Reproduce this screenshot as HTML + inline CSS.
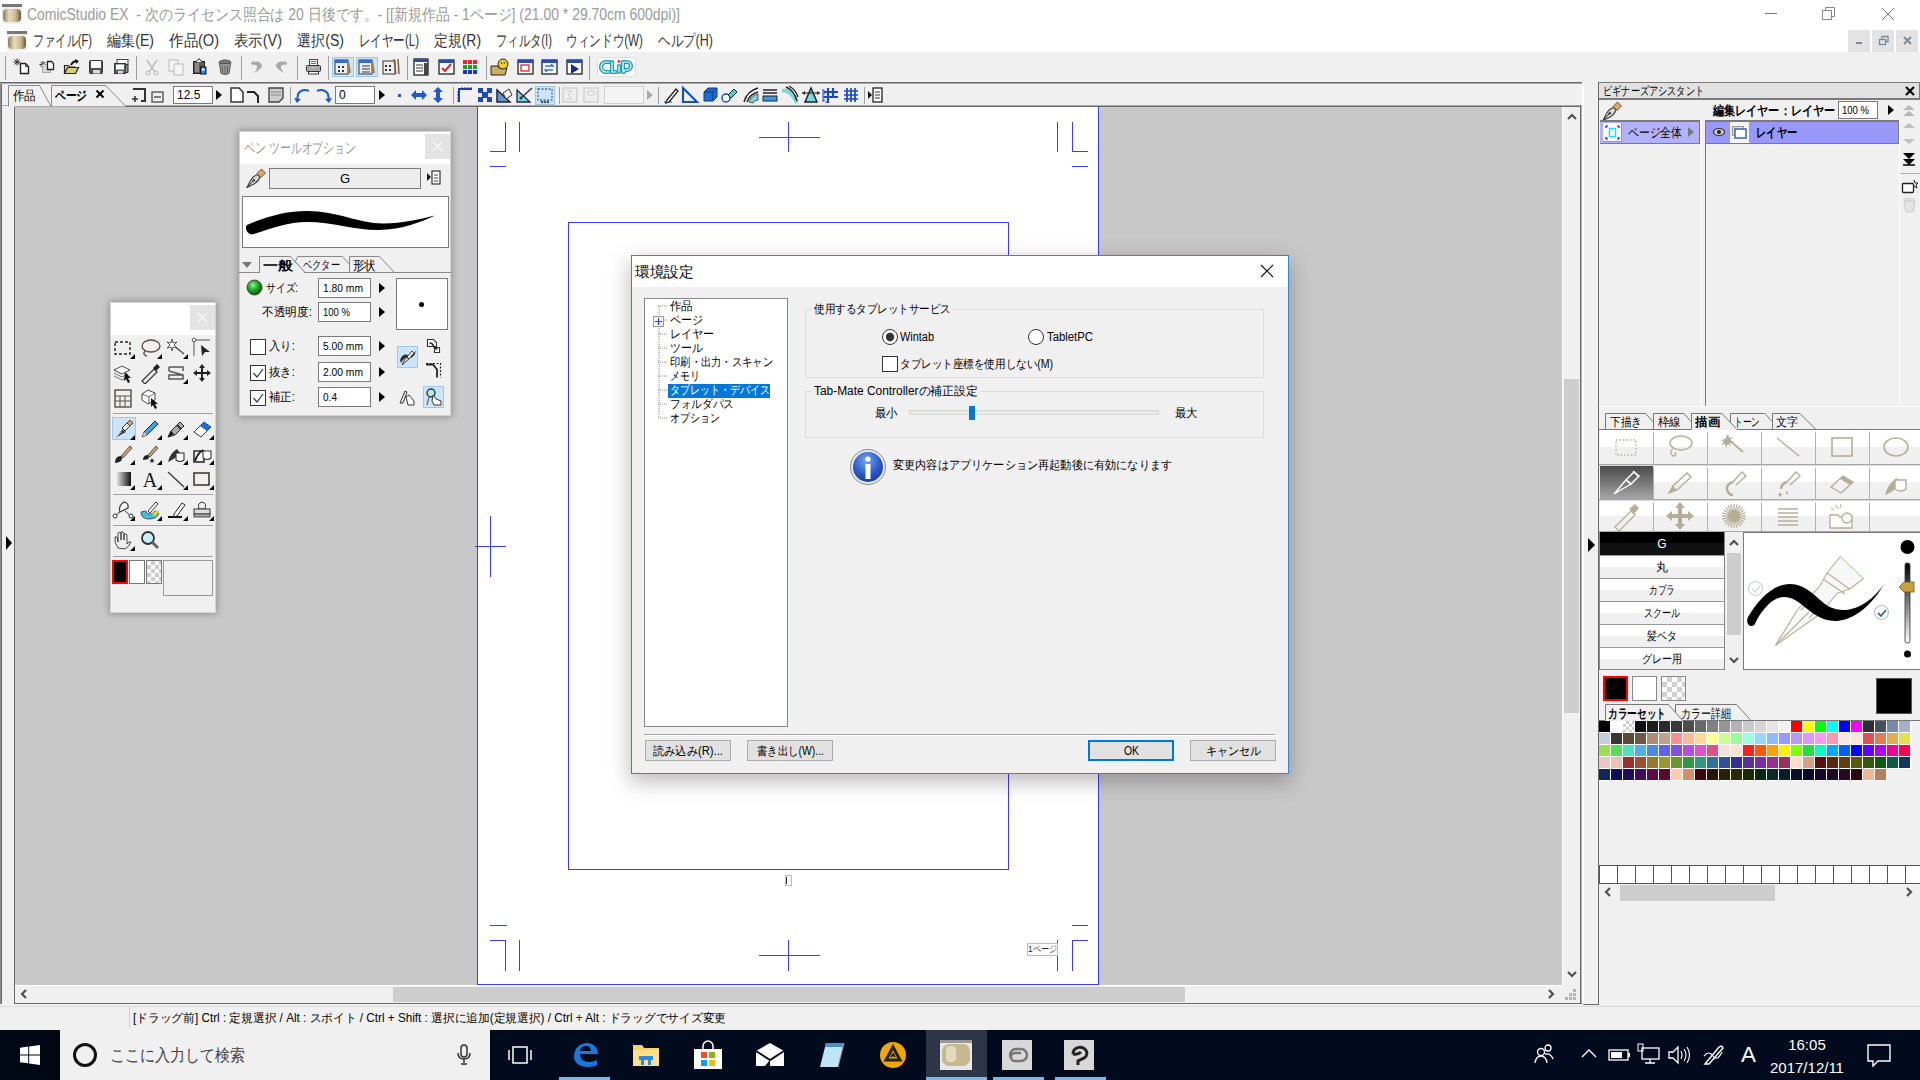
<!DOCTYPE html>
<html><head><meta charset="utf-8">
<style>
*{box-sizing:border-box;margin:0;padding:0}
html,body{width:1920px;height:1080px;overflow:hidden;background:#f0f0f0;font-family:"Liberation Sans",sans-serif;color:#000;position:relative}
.a{position:absolute}
.t{position:absolute;white-space:pre;line-height:1}
</style></head><body>
<div class="a" style="left:0px;top:0px;width:1920px;height:52px;background:#fff"></div>
<svg class="a" style="left:2px;top:4px;" width="20" height="20" viewBox="0 0 20 20"><defs><linearGradient id="csg2" x1="0" x2="1"><stop offset="0" stop-color="#8a7a5a"/><stop offset=".35" stop-color="#e8dcc0"/><stop offset=".7" stop-color="#c8b890"/><stop offset="1" stop-color="#6a5a40"/></linearGradient></defs><rect x="0" y="0" width="20" height="3" fill="#777"/><rect x="0" y="3" width="20" height="17" fill="#eee"/><rect x="1" y="5" width="18" height="13" rx="4" fill="url(#csg2)"/></svg>
<div class="t" style="left:27.0px;top:6.5px;width:751px;overflow-x:clip;overflow-y:visible;font-size:16px;color:#9a9a9a;font-weight:400;transform:scaleX(0.8722);transform-origin:0 0;">ComicStudio EX  - 次のライセンス照合は 20 日後です。- [[新規作品 - 1ページ] (21.00 * 29.70cm 600dpi)]</div>
<div class="a" style="left:1765px;top:13px;width:12px;height:1px;background:#777"></div>
<svg class="a" style="left:1822px;top:7px;" width="14" height="14" viewBox="0 0 14 14"><rect x="0.5" y="3.5" width="9" height="9" fill="none" stroke="#888"/><path d="M3.5 3.5V0.5H12.5V9.5H9.5" fill="none" stroke="#888"/></svg>
<svg class="a" style="left:1881px;top:7px;" width="14" height="14" viewBox="0 0 14 14"><path d="M1 1L13 13M13 1L1 13" stroke="#777" stroke-width="1"/></svg>
<svg class="a" style="left:7px;top:31px;" width="20" height="20" viewBox="0 0 20 20"><defs><linearGradient id="csg7" x1="0" x2="1"><stop offset="0" stop-color="#8a7a5a"/><stop offset=".35" stop-color="#e8dcc0"/><stop offset=".7" stop-color="#c8b890"/><stop offset="1" stop-color="#6a5a40"/></linearGradient></defs><rect x="0" y="0" width="20" height="3" fill="#777"/><rect x="0" y="3" width="20" height="17" fill="#eee"/><rect x="1" y="5" width="18" height="13" rx="4" fill="url(#csg7)"/></svg>
<div class="t" style="left:33.0px;top:33.0px;width:86px;overflow-x:clip;overflow-y:visible;font-size:16px;color:#333;font-weight:400;transform:scaleX(0.6987);transform-origin:0 0;">ファイル(F)</div>
<div class="t" style="left:107.0px;top:33.0px;width:55px;overflow-x:clip;overflow-y:visible;font-size:16px;color:#333;font-weight:400;transform:scaleX(0.8813);transform-origin:0 0;">編集(E)</div>
<div class="t" style="left:169.0px;top:33.0px;width:57px;overflow-x:clip;overflow-y:visible;font-size:16px;color:#333;font-weight:400;transform:scaleX(0.9073);transform-origin:0 0;">作品(O)</div>
<div class="t" style="left:234.0px;top:33.0px;width:55px;overflow-x:clip;overflow-y:visible;font-size:16px;color:#333;font-weight:400;transform:scaleX(0.9001);transform-origin:0 0;">表示(V)</div>
<div class="t" style="left:297.0px;top:33.0px;width:55px;overflow-x:clip;overflow-y:visible;font-size:16px;color:#333;font-weight:400;transform:scaleX(0.8813);transform-origin:0 0;">選択(S)</div>
<div class="t" style="left:359.0px;top:33.0px;width:86px;overflow-x:clip;overflow-y:visible;font-size:16px;color:#333;font-weight:400;transform:scaleX(0.7180);transform-origin:0 0;">レイヤー(L)</div>
<div class="t" style="left:434.0px;top:33.0px;width:56px;overflow-x:clip;overflow-y:visible;font-size:16px;color:#333;font-weight:400;transform:scaleX(0.8669);transform-origin:0 0;">定規(R)</div>
<div class="t" style="left:496.0px;top:33.0px;width:81px;overflow-x:clip;overflow-y:visible;font-size:16px;color:#333;font-weight:400;transform:scaleX(0.7079);transform-origin:0 0;">フィルタ(I)</div>
<div class="t" style="left:566.0px;top:33.0px;width:108px;overflow-x:clip;overflow-y:visible;font-size:16px;color:#333;font-weight:400;transform:scaleX(0.7280);transform-origin:0 0;">ウィンドウ(W)</div>
<div class="t" style="left:658.0px;top:33.0px;width:72px;overflow-x:clip;overflow-y:visible;font-size:16px;color:#333;font-weight:400;transform:scaleX(0.7833);transform-origin:0 0;">ヘルプ(H)</div>
<div class="a" style="left:1848px;top:30px;width:22px;height:23px;background:#e3e3e3"></div>
<div class="a" style="left:1872px;top:30px;width:22px;height:23px;background:#e3e3e3"></div>
<div class="a" style="left:1896px;top:30px;width:22px;height:23px;background:#e3e3e3"></div>
<svg class="a" style="left:1854px;top:33px;" width="12" height="14" viewBox="0 0 12 14"><rect x="2" y="9" width="6" height="2" fill="#7b8a99"/></svg>
<svg class="a" style="left:1878px;top:33px;" width="12" height="14" viewBox="0 0 12 14"><rect x="1.5" y="6.5" width="6" height="5" fill="none" stroke="#7b8a99" stroke-width="1.3"/><path d="M4 6V3.5H10V8.5H8" fill="none" stroke="#7b8a99" stroke-width="1.3"/></svg>
<svg class="a" style="left:1902px;top:33px;" width="12" height="14" viewBox="0 0 12 14"><path d="M2 4L9 11M9 4L2 11" stroke="#7b8a99" stroke-width="2"/></svg>
<div class="a" style="left:0px;top:52px;width:1920px;height:30px;background:#f0f0f0"></div>
<div class="a" style="left:0px;top:82px;width:1582px;height:1px;background:#6a6a6a"></div>
<div class="a" style="left:0px;top:83px;width:1582px;height:1px;background:#a8a8a8"></div>
<div class="a" style="left:0px;top:84px;width:1582px;height:22px;background:#f0f0f0"></div>
<div class="a" style="left:0px;top:105px;width:1582px;height:1px;background:#a8a8a8"></div>
<div class="a" style="left:14px;top:106px;width:1568px;height:1px;background:#6a6a6a"></div>
<div class="a" style="left:0px;top:84px;width:1px;height:920px;background:#8a8a8a"></div>
<div class="a" style="left:1px;top:84px;width:1px;height:920px;background:#6a6a6a"></div>
<div class="a" style="left:14px;top:107px;width:1px;height:897px;background:#6a6a6a"></div>
<div class="a" style="left:15px;top:107px;width:1547px;height:878px;background:#c8c8c8"></div>
<div class="a" style="left:5px;top:56px;width:1px;height:24px;background:#a0a0a0"></div>
<div class="a" style="left:136px;top:56px;width:1px;height:24px;background:#a0a0a0"></div>
<div class="a" style="left:241px;top:56px;width:1px;height:24px;background:#a0a0a0"></div>
<div class="a" style="left:297px;top:56px;width:1px;height:24px;background:#a0a0a0"></div>
<div class="a" style="left:328px;top:56px;width:1px;height:24px;background:#a0a0a0"></div>
<div class="a" style="left:407px;top:56px;width:1px;height:24px;background:#a0a0a0"></div>
<div class="a" style="left:486px;top:56px;width:1px;height:24px;background:#a0a0a0"></div>
<div class="a" style="left:589px;top:56px;width:1px;height:24px;background:#a0a0a0"></div>
<svg class="a" style="left:12px;top:57px;" width="20" height="20" viewBox="0 0 20 20"><path d="M5 1.5v7M1.5 5h7M2.5 2.5l5 5M7.5 2.5l-5 5" stroke="#3a2a2a" stroke-width="1"/><path d="M8.5 6.5h5l3 3v7h-8z" fill="#fff" stroke="#222" stroke-width="1.4"/><path d="M13.5 6.5v3h3" fill="none" stroke="#444"/></svg>
<svg class="a" style="left:36px;top:57px;" width="20" height="20" viewBox="0 0 20 20"><path d="M7 4v7M3.5 7.5h7M4.5 5l5 5M9.5 5l-5 5" stroke="#3a2a2a" stroke-width="1"/><rect x="6.5" y="7.5" width="8" height="8" fill="#d8d8d8" stroke="#aaa"/><path d="M11.5 4.5h4l2 2v6h-6z" fill="#fff" stroke="#222" stroke-width="1.3"/></svg>
<svg class="a" style="left:61px;top:57px;" width="20" height="20" viewBox="0 0 20 20"><path d="M3.5 8.5h4l1 1.5h5v6.5h-10z" fill="#e8e090" stroke="#222" stroke-width="1.2"/><path d="M3.5 16.5l3-6h11l-3 6z" fill="#d8d070" stroke="#222" stroke-width="1.2"/><path d="M10 8q2-4 6-4" fill="none" stroke="#111" stroke-width="1.8"/><path d="M14 2l4 2-3 3z" fill="#111"/></svg>
<svg class="a" style="left:86px;top:57px;" width="20" height="20" viewBox="0 0 20 20"><rect x="3.5" y="3.5" width="13" height="13" rx="1" fill="#4a4e58" stroke="#333"/><rect x="5" y="4" width="10" height="7" fill="#fff"/><rect x="7" y="13" width="7" height="3.5" fill="#d8ddd0"/></svg>
<svg class="a" style="left:111px;top:57px;" width="20" height="20" viewBox="0 0 20 20"><rect x="6" y="2.5" width="11" height="5" fill="#fff" stroke="#444"/><rect x="3.5" y="6.5" width="11" height="10" fill="#5a5e68" stroke="#333"/><rect x="5" y="7.5" width="8" height="5" fill="#fff"/><rect x="7" y="14" width="5" height="2.5" fill="#d8ddd0"/><path d="M15 7.5h2v8h-2.5" fill="#888" stroke="#333"/></svg>
<svg class="a" style="left:142px;top:57px;" width="20" height="20" viewBox="0 0 20 20"><path d="M5 3l8 12M15 3L7 15" stroke="#bbb" stroke-width="1.4"/><circle cx="6" cy="16" r="2" fill="none" stroke="#bbb"/><circle cx="14" cy="16" r="2" fill="none" stroke="#bbb"/></svg>
<svg class="a" style="left:166px;top:57px;" width="20" height="20" viewBox="0 0 20 20"><rect x="3" y="3" width="9" height="11" fill="#f4f4f4" stroke="#bbb"/><rect x="8" y="7" width="9" height="11" fill="#f4f4f4" stroke="#bbb"/></svg>
<svg class="a" style="left:190px;top:57px;" width="20" height="20" viewBox="0 0 20 20"><rect x="3.5" y="4.5" width="11" height="12" fill="#5a5a5a" stroke="#222"/><rect x="5" y="6" width="4" height="9" fill="#888"/><path d="M6 5l3-3.5 3 3.5" fill="#fff" stroke="#222"/><rect x="10.5" y="10" width="5.5" height="7" fill="#2a8ae8" stroke="#111"/><rect x="12" y="11.5" width="2.5" height="2" fill="#fff"/></svg>
<svg class="a" style="left:215px;top:57px;" width="20" height="20" viewBox="0 0 20 20"><ellipse cx="10" cy="5.5" rx="6" ry="2.5" fill="#777" stroke="#555"/><path d="M4.5 6.5h11l-1.5 10q-4 2-8 0z" fill="#999" stroke="#555"/><path d="M7.5 8.5v7M10 8.5v8M12.5 8.5v7" stroke="#666"/></svg>
<svg class="a" style="left:247px;top:57px;" width="20" height="20" viewBox="0 0 20 20"><path d="M4 6.5Q9 3 13 5.5Q17 8.5 13 12Q10 14.5 7 16Q10.5 12 10 9.5Q9.5 7.5 4 6.5z" fill="#a8a8a8"/><path d="M3.5 6.5l3-3v5z" fill="#a8a8a8"/></svg>
<svg class="a" style="left:271px;top:57px;" width="20" height="20" viewBox="0 0 20 20"><path d="M16 6.5Q11 3 7 5.5Q3 8.5 7 12Q10 14.5 13 16Q9.5 12 10 9.5Q10.5 7.5 16 6.5z" fill="#a8a8a8"/><path d="M16.5 6.5l-3-3v5z" fill="#a8a8a8"/></svg>
<svg class="a" style="left:303px;top:57px;" width="20" height="20" viewBox="0 0 20 20"><rect x="6.5" y="2.5" width="8" height="6" fill="#fff" stroke="#444"/><path d="M8 4.5h5M8 6.5h5" stroke="#2a7ad0" stroke-width="1.2"/><rect x="3.5" y="8.5" width="14" height="6" rx="1" fill="#aaa" stroke="#333"/><rect x="9" y="10" width="3" height="1" fill="#e0d040"/><rect x="5.5" y="14.5" width="10" height="2.5" fill="#fff" stroke="#333"/></svg>
<div class="a" style="left:332px;top:57px;width:22px;height:20px;background:#cce4f7;border:1px solid #99c9ef"></div>
<div class="a" style="left:356px;top:57px;width:22px;height:20px;background:#cce4f7;border:1px solid #99c9ef"></div>
<svg class="a" style="left:333px;top:57px;" width="20" height="20" viewBox="0 0 20 20"><rect x="2" y="3" width="13" height="14" fill="#eee" stroke="#333"/><rect x="2" y="3" width="13" height="3" fill="#3a6ad0"/><path d="M5 9h2v2H5zM9 9h2v2H9zM5 13h2v2H5zM9 13h2v2H9z" fill="#333"/><path d="M15 4l2 12" stroke="#a08040" stroke-width="2"/></svg>
<svg class="a" style="left:357px;top:57px;" width="20" height="20" viewBox="0 0 20 20"><rect x="2" y="3" width="13" height="14" fill="#eee" stroke="#333"/><rect x="2" y="3" width="13" height="3" fill="#3a6ad0"/><path d="M5 9h8M5 12h8M5 15h8" stroke="#333"/><path d="M15 4l2 12" stroke="#a08040" stroke-width="2"/></svg>
<svg class="a" style="left:381px;top:57px;" width="20" height="20" viewBox="0 0 20 20"><rect x="2" y="4" width="12" height="13" fill="#eee" stroke="#333"/><path d="M4 8h2v2H4zM8 8h2v2H8zM4 12h2v2H4zM8 12h2v2H8z" fill="#333"/><path d="M13 2l2 15M17 2l1 15" stroke="#806040" stroke-width="1.5"/></svg>
<svg class="a" style="left:411px;top:57px;" width="20" height="20" viewBox="0 0 20 20"><rect x="3" y="2" width="14" height="16" fill="#fff" stroke="#222" stroke-width="1.3"/><rect x="3" y="2" width="14" height="3" fill="#2a4ab0"/><path d="M5 8h7M5 11h7M5 14h7" stroke="#333"/><rect x="13" y="6" width="4" height="12" fill="#444"/></svg>
<svg class="a" style="left:436px;top:57px;" width="20" height="20" viewBox="0 0 20 20"><rect x="3" y="3" width="15" height="14" fill="#fff" stroke="#222" stroke-width="1.3"/><rect x="3" y="3" width="15" height="3" fill="#2a4ab0"/><path d="M6 11l3 3 6-7" stroke="#e02020" stroke-width="2" fill="none"/></svg>
<svg class="a" style="left:460px;top:57px;" width="20" height="20" viewBox="0 0 20 20"><g><rect x="3" y="3" width="4" height="4" fill="#e02828"/><rect x="8" y="3" width="4" height="4" fill="#e02828"/><rect x="13" y="3" width="4" height="4" fill="#e02828"/><rect x="3" y="8" width="4" height="4" fill="#20a020"/><rect x="8" y="8" width="4" height="4" fill="#20a020"/><rect x="13" y="8" width="4" height="4" fill="#20a020"/><rect x="3" y="13" width="4" height="4" fill="#2828d8"/><rect x="8" y="13" width="4" height="4" fill="#2828d8"/><rect x="13" y="13" width="4" height="4" fill="#2828d8"/></g></svg>
<svg class="a" style="left:490px;top:57px;" width="20" height="20" viewBox="0 0 20 20"><path d="M1 9h7l1 2h8l-2 7H1z" fill="#c8b058" stroke="#222"/><circle cx="13" cy="7" r="5" fill="#f0d020" stroke="#222"/><circle cx="11.5" cy="6" r=".8" fill="#222"/><circle cx="14.5" cy="6" r=".8" fill="#222"/></svg>
<svg class="a" style="left:515px;top:57px;" width="20" height="20" viewBox="0 0 20 20"><rect x="3" y="3" width="15" height="14" fill="#fff" stroke="#222" stroke-width="1.3"/><rect x="3" y="3" width="15" height="3" fill="#2a4ab0"/><rect x="6" y="8" width="8" height="6" fill="none" stroke="#e02020" stroke-width="1.3"/></svg>
<svg class="a" style="left:539px;top:57px;" width="20" height="20" viewBox="0 0 20 20"><rect x="3" y="3" width="15" height="14" fill="#fff" stroke="#222" stroke-width="1.3"/><rect x="3" y="3" width="15" height="3" fill="#2a4ab0"/><path d="M6 9h8l-2-2M14 13H6l2 2" stroke="#2a7ad0" stroke-width="1.5" fill="none"/></svg>
<svg class="a" style="left:564px;top:57px;" width="20" height="20" viewBox="0 0 20 20"><rect x="3" y="3" width="15" height="14" fill="#fff" stroke="#222" stroke-width="1.3"/><rect x="3" y="3" width="15" height="3" fill="#2a4ab0"/><path d="M7 7l8 5-8 5z" fill="#1a2a90"/></svg>
<div class="a" style="left:597px;top:57px;width:39px;height:20px;background:#fff;border:1px solid #ddd;border-radius:3px"></div>
<svg class="a" style="left:599px;top:58px;" width="35" height="18" viewBox="0 0 35 18"><g fill="none" stroke-linecap="round" stroke-linejoin="round"><g stroke="#1aa0b4" stroke-width="4.2"><path d="M10 4H7a5 5 0 0 0 0 10h3"/><path d="M13 4v10h4"/><path d="M20 8v6"/><path d="M24 14V4h4a4 4 0 0 1 0 8h-2q-1 0-1 2"/></g><g stroke="#fff" stroke-width="1.2"><path d="M10 4H7a5 5 0 0 0 0 10h3"/><path d="M13 4v10h4"/><path d="M20 8v6"/><path d="M24 14V4h4a4 4 0 0 1 0 8h-2q-1 0-1 2"/></g></g><circle cx="20" cy="3.5" r="1.4" fill="#e03030"/></svg>
<svg class="a" style="left:6px;top:84px;" width="125" height="23" viewBox="0 0 125 23"><path d="M2.5 22.5V1.5H33.5L45 22.5" fill="#f0f0f0" stroke="#888"/><path d="M45.5 22.5V1.5H99.5L120 22.5" fill="#f0f0f0" stroke="#888"/></svg>
<div class="t" style="left:13.0px;top:88.5px;width:28px;overflow-x:clip;overflow-y:visible;font-size:13px;color:#000;font-weight:400;transform:scaleX(0.8846);transform-origin:0 0;">作品</div>
<div class="t" style="left:55.0px;top:88.5px;width:41px;overflow-x:clip;overflow-y:visible;font-size:13px;color:#000;font-weight:700;transform:scaleX(0.8205);transform-origin:0 0;">ページ</div>
<svg class="a" style="left:95px;top:89px;" width="10" height="10" viewBox="0 0 10 10"><path d="M1.5 1.5L8.5 8.5M8.5 1.5L1.5 8.5" stroke="#000" stroke-width="2"/></svg>
<svg class="a" style="left:130px;top:85px;" width="20" height="20" viewBox="0 0 20 20"><path d="M3 4h12v12h-4" fill="none" stroke="#333" stroke-width="2"/><path d="M5 11v6M2 14h6" stroke="#333" stroke-width="1.5"/></svg>
<svg class="a" style="left:148px;top:85px;" width="20" height="20" viewBox="0 0 20 20"><rect x="4" y="7" width="11" height="10" fill="#eee" stroke="#555" stroke-width="1.4"/><path d="M6 12h7" stroke="#555" stroke-width="1.5"/></svg>
<div class="a" style="left:173px;top:86px;width:40px;height:18px;background:#fff;border:1px solid #7a7a7a"></div>
<div class="t" style="left:177.0px;top:89.0px;width:25px;overflow-x:clip;overflow-y:visible;font-size:12px;color:#000;font-weight:400;">12.5</div>
<svg class="a" style="left:216px;top:90px;" width="6" height="10" viewBox="0 0 6 10"><path d="M0 0L6 5L0 10z" fill="#000"/></svg>
<svg class="a" style="left:227px;top:85px;" width="20" height="20" viewBox="0 0 20 20"><path d="M4 3h8l4 4v10H4z" fill="#fff" stroke="#333" stroke-width="1.5"/></svg>
<svg class="a" style="left:244px;top:85px;" width="20" height="20" viewBox="0 0 20 20"><path d="M3 7h7l4 4v7" fill="none" stroke="#222" stroke-width="2"/></svg>
<svg class="a" style="left:266px;top:85px;" width="20" height="20" viewBox="0 0 20 20"><path d="M3 3h14v10l-4 4H3z" fill="#ccc" stroke="#444" stroke-width="1.4"/><path d="M5 7h10M5 10h10" stroke="#888"/></svg>
<div class="a" style="left:290px;top:87px;width:1px;height:17px;background:#a0a0a0"></div>
<svg class="a" style="left:293px;top:85px;" width="20" height="20" viewBox="0 0 20 20"><path d="M16 6a8 8 0 0 0-11 3l-1 7" fill="none" stroke="#1a5ad0" stroke-width="2"/><path d="M1 13l3 5 4-4z" fill="#1a5ad0"/></svg>
<svg class="a" style="left:314px;top:85px;" width="20" height="20" viewBox="0 0 20 20"><path d="M3 6a8 8 0 0 1 11 3l1 7" fill="none" stroke="#1a5ad0" stroke-width="2"/><path d="M18 13l-3 5-4-4z" fill="#1a5ad0"/></svg>
<div class="a" style="left:335px;top:86px;width:40px;height:18px;background:#fff;border:1px solid #7a7a7a"></div>
<div class="t" style="left:339.0px;top:89.0px;width:9px;overflow-x:clip;overflow-y:visible;font-size:12px;color:#000;font-weight:400;">0</div>
<svg class="a" style="left:379px;top:90px;" width="6" height="10" viewBox="0 0 6 10"><path d="M0 0L6 5L0 10z" fill="#000"/></svg>
<div class="a" style="left:398px;top:94px;width:3px;height:3px;background:#1a5ad0"></div>
<svg class="a" style="left:409px;top:85px;" width="20" height="20" viewBox="0 0 20 20"><path d="M2 10l5-5v3h6V5l5 5-5 5v-3H7v3z" fill="#1a5ad0"/></svg>
<svg class="a" style="left:428px;top:85px;" width="20" height="20" viewBox="0 0 20 20"><path d="M10 2l5 5h-3v6h3l-5 5-5-5h3V7H5z" fill="#1a5ad0"/></svg>
<div class="a" style="left:453px;top:87px;width:1px;height:17px;background:#a0a0a0"></div>
<svg class="a" style="left:455px;top:85px;" width="20" height="20" viewBox="0 0 20 20"><path d="M4 17V4h13" fill="none" stroke="#1a3ab0" stroke-width="2"/><path d="M7 4V2M10 4V2M13 4V2M16 4V2M4 7H2M4 10H2M4 13H2M4 16H2" stroke="#1a3ab0"/></svg>
<svg class="a" style="left:475px;top:85px;" width="20" height="20" viewBox="0 0 20 20"><path d="M3 3h5v5H3zM12 3h5v5h-5zM3 12h5v5H3zM12 12h5v5h-5zM7 7h6v6H7z" fill="#1a4ab8"/></svg>
<svg class="a" style="left:495px;top:85px;" width="20" height="20" viewBox="0 0 20 20"><path d="M2 17V5l13 12z" fill="#5a9ad8" stroke="#223" stroke-width="1.5"/><path d="M8 8l6-4 3 6-6 4z" fill="#eee" stroke="#333"/></svg>
<svg class="a" style="left:515px;top:85px;" width="20" height="20" viewBox="0 0 20 20"><path d="M2 17V5l13 12z" fill="#7ad8e8" stroke="#225" stroke-width="1.3"/><path d="M6 13l11-10" stroke="#333" stroke-width="1.4"/><circle cx="6" cy="13" r="1.5" fill="#333"/></svg>
<div class="a" style="left:535px;top:86px;width:20px;height:19px;background:#cce4f7;border:1px solid #99c9ef"></div>
<svg class="a" style="left:535px;top:85px;" width="20" height="20" viewBox="0 0 20 20"><rect x="3" y="4" width="14" height="11" fill="none" stroke="#4a6a9a" stroke-dasharray="2 1.5" stroke-width="1.3"/><circle cx="7" cy="17" r="1.3" fill="#555"/><circle cx="10" cy="17" r="1.3" fill="#555"/><circle cx="13" cy="17" r="1.3" fill="#555"/></svg>
<div class="a" style="left:559px;top:87px;width:1px;height:17px;background:#a0a0a0"></div>
<svg class="a" style="left:560px;top:85px;" width="20" height="20" viewBox="0 0 20 20"><rect x="3" y="3" width="14" height="14" fill="#eee" stroke="#ccc" stroke-width="1.3"/><path d="M7 6h5l-4 4 4 4H7" fill="none" stroke="#ccc"/></svg>
<svg class="a" style="left:581px;top:85px;" width="20" height="20" viewBox="0 0 20 20"><rect x="3" y="3" width="14" height="14" fill="#eee" stroke="#ccc" stroke-width="1.3"/><ellipse cx="10" cy="8" rx="4" ry="2.5" fill="none" stroke="#ccc"/></svg>
<div class="a" style="left:604px;top:86px;width:40px;height:18px;background:#f4f4f4;border:1px solid #d0d0d0"></div>
<svg class="a" style="left:647px;top:90px;" width="6" height="10" viewBox="0 0 6 10"><path d="M0 0L6 5L0 10z" fill="#aaa"/></svg>
<div class="a" style="left:658px;top:87px;width:1px;height:17px;background:#a0a0a0"></div>
<svg class="a" style="left:660px;top:85px;" width="20" height="20" viewBox="0 0 20 20"><path d="M4 17h8" stroke="#2a8ae0" stroke-width="1.5"/><path d="M7 15l9-11 2 2-9 11-3 1z" fill="#fff" stroke="#222" stroke-width="1.3"/></svg>
<svg class="a" style="left:680px;top:85px;" width="20" height="20" viewBox="0 0 20 20"><path d="M3 17V3l14 14z" fill="none" stroke="#1a6ad0" stroke-width="2.2"/><path d="M3 17V3l14 14z" fill="none" stroke="#222" stroke-width=".6"/></svg>
<svg class="a" style="left:700px;top:85px;" width="20" height="20" viewBox="0 0 20 20"><path d="M4 7l4-4h9v9l-4 4H4z" fill="#1a6ad0" stroke="#0a3a80"/><path d="M4 7h9v9M13 7l4-4" stroke="#0a3a80" fill="none"/></svg>
<svg class="a" style="left:719px;top:85px;" width="20" height="20" viewBox="0 0 20 20"><circle cx="7" cy="13" r="4" fill="#fff" stroke="#1a4ab8" stroke-width="1.5"/><path d="M9 10l6-6 3 3-6 6z" fill="#40d0d8" stroke="#222"/></svg>
<svg class="a" style="left:741px;top:85px;" width="20" height="20" viewBox="0 0 20 20"><path d="M3 17Q6 6 17 3M6 17Q9 9 17 7" fill="none" stroke="#222" stroke-width="1.4"/><path d="M8 17q3-7 9-8v6q-4 0-5 3z" fill="#7ad8e0" stroke="#333" stroke-width=".8"/></svg>
<svg class="a" style="left:760px;top:85px;" width="20" height="20" viewBox="0 0 20 20"><path d="M3 5h14M3 8h14" stroke="#222" stroke-width="1.6"/><rect x="3" y="11" width="14" height="5" fill="#3a9ae0" stroke="#222"/></svg>
<svg class="a" style="left:780px;top:85px;" width="20" height="20" viewBox="0 0 20 20"><path d="M2 6q8-3 15 12" fill="none" stroke="#7ad8e0" stroke-width="4"/><path d="M6 2q8 3 11 14M9 1q7 4 9 11" fill="none" stroke="#222" stroke-width="1.4"/></svg>
<svg class="a" style="left:801px;top:85px;" width="20" height="20" viewBox="0 0 20 20"><path d="M10 3L4 17h12z" fill="#7ad8e0" stroke="#222" stroke-width="1.5"/><path d="M1 8h18" stroke="#333" stroke-width="1.2"/><path d="M1 8l3-2v4zM19 8l-3-2v4z" fill="#333"/></svg>
<svg class="a" style="left:820px;top:85px;" width="20" height="20" viewBox="0 0 20 20"><path d="M8 3v15M13 3v9M4 7h14M4 12h14" stroke="#1a4ab8" stroke-width="2.2"/><path d="M3 4v13M3 6h2M3 9h2M3 12h2M3 15h2M5 17h2" stroke="#1a4ab8" stroke-width="1"/></svg>
<svg class="a" style="left:841px;top:85px;" width="20" height="20" viewBox="0 0 20 20"><path d="M6 3v14M10 3v14M14 3v14M3 6h14M3 10h14M3 14h14" stroke="#1a4ab8" stroke-width="1.7"/></svg>
<div class="a" style="left:864px;top:87px;width:1px;height:17px;background:#a0a0a0"></div>
<svg class="a" style="left:866px;top:85px;" width="20" height="20" viewBox="0 0 20 20"><path d="M2 6l4 4-4 4z" fill="#111"/><rect x="7" y="3" width="9" height="14" fill="#fff" stroke="#222" stroke-width="1.3"/><path d="M9 7h5M9 10h5M9 13h5" stroke="#333"/></svg>
<div class="a" style="left:477px;top:107px;width:622px;height:878px;background:#fff"></div>
<div class="a" style="left:477px;top:107px;width:1px;height:878px;background:#3c3cff"></div>
<div class="a" style="left:1098px;top:107px;width:1px;height:878px;background:#3c3cff"></div>
<div class="a" style="left:477px;top:984px;width:622px;height:1px;background:#3c3cff"></div>
<div class="a" style="left:568px;top:222px;width:441px;height:1px;background:#3c3cff"></div>
<div class="a" style="left:568px;top:869px;width:441px;height:1px;background:#3c3cff"></div>
<div class="a" style="left:568px;top:222px;width:1px;height:648px;background:#3c3cff"></div>
<div class="a" style="left:1008px;top:222px;width:1px;height:648px;background:#3c3cff"></div>
<div class="a" style="left:505px;top:122px;width:1px;height:30px;background:#3c3cff"></div>
<div class="a" style="left:490px;top:151px;width:16px;height:1px;background:#3c3cff"></div>
<div class="a" style="left:519px;top:122px;width:1px;height:30px;background:#3c3cff"></div>
<div class="a" style="left:490px;top:166px;width:16px;height:1px;background:#3c3cff"></div>
<div class="a" style="left:788px;top:122px;width:1px;height:30px;background:#3c3cff"></div>
<div class="a" style="left:759px;top:137px;width:61px;height:1px;background:#3c3cff"></div>
<div class="a" style="left:1057px;top:122px;width:1px;height:30px;background:#3c3cff"></div>
<div class="a" style="left:1072px;top:122px;width:1px;height:30px;background:#3c3cff"></div>
<div class="a" style="left:1072px;top:151px;width:16px;height:1px;background:#3c3cff"></div>
<div class="a" style="left:1072px;top:166px;width:16px;height:1px;background:#3c3cff"></div>
<div class="a" style="left:490px;top:925px;width:17px;height:1px;background:#3c3cff"></div>
<div class="a" style="left:490px;top:940px;width:16px;height:1px;background:#3c3cff"></div>
<div class="a" style="left:505px;top:940px;width:1px;height:31px;background:#3c3cff"></div>
<div class="a" style="left:519px;top:940px;width:1px;height:31px;background:#3c3cff"></div>
<div class="a" style="left:788px;top:940px;width:1px;height:31px;background:#3c3cff"></div>
<div class="a" style="left:759px;top:955px;width:61px;height:1px;background:#3c3cff"></div>
<div class="a" style="left:1057px;top:940px;width:1px;height:31px;background:#3c3cff"></div>
<div class="a" style="left:1072px;top:940px;width:1px;height:31px;background:#3c3cff"></div>
<div class="a" style="left:1072px;top:940px;width:16px;height:1px;background:#3c3cff"></div>
<div class="a" style="left:1072px;top:925px;width:16px;height:1px;background:#3c3cff"></div>
<div class="a" style="left:490px;top:516px;width:1px;height:61px;background:#3c3cff"></div>
<div class="a" style="left:475px;top:546px;width:31px;height:1px;background:#3c3cff"></div>
<div class="a" style="left:785px;top:875px;width:7px;height:11px;border:1px solid #60e0f0"></div>
<div class="a" style="left:786px;top:877px;width:1px;height:7px;background:#333"></div>
<div class="a" style="left:1027px;top:943px;width:31px;height:13px;border:1px solid #60e0f0"></div>
<div class="t" style="left:1028.0px;top:944.5px;width:34px;overflow-x:clip;overflow-y:visible;font-size:9px;color:#222;font-weight:400;transform:scaleX(0.9058);transform-origin:0 0;">1ページ</div>
<div class="a" style="left:1562px;top:107px;width:1px;height:878px;background:#fff"></div>
<div class="a" style="left:1563px;top:107px;width:17px;height:878px;background:#f0f0f0"></div>
<svg class="a" style="left:1566px;top:112px;" width="12" height="10" viewBox="0 0 12 10"><path d="M2 7l4-4 4 4" fill="none" stroke="#505050" stroke-width="2.2"/></svg>
<svg class="a" style="left:1566px;top:969px;" width="12" height="10" viewBox="0 0 12 10"><path d="M2 3l4 4 4-4" fill="none" stroke="#505050" stroke-width="2.2"/></svg>
<div class="a" style="left:1564px;top:379px;width:15px;height:334px;background:#cdcdcd"></div>
<div class="a" style="left:1580px;top:105px;width:1px;height:899px;background:#6a6a6a"></div>
<div class="a" style="left:1581px;top:105px;width:1px;height:899px;background:#b0b0b0"></div>
<div class="a" style="left:1580px;top:84px;width:2px;height:21px;background:#f0f0f0"></div>
<div class="a" style="left:15px;top:985px;width:1565px;height:18px;background:#f0f0f0"></div>
<div class="a" style="left:15px;top:985px;width:1547px;height:1px;background:#fff"></div>
<svg class="a" style="left:19px;top:988px;" width="12" height="12" viewBox="0 0 12 12"><path d="M7 2L3 6l4 4" fill="none" stroke="#505050" stroke-width="2.2"/></svg>
<svg class="a" style="left:1545px;top:988px;" width="12" height="12" viewBox="0 0 12 12"><path d="M4 2l4 4-4 4" fill="none" stroke="#505050" stroke-width="2.2"/></svg>
<div class="a" style="left:393px;top:987px;width:792px;height:15px;background:#cdcdcd"></div>
<svg class="a" style="left:1565px;top:989px;" width="14" height="14" viewBox="0 0 14 14"><g fill="#b4b4b4"><rect x="8" y="0" width="3" height="3"/><rect x="8" y="4" width="3" height="3"/><rect x="8" y="8" width="3" height="3"/><rect x="4" y="4" width="3" height="3"/><rect x="4" y="8" width="3" height="3"/><rect x="0" y="8" width="3" height="3"/></g></svg>
<div class="a" style="left:14px;top:1003px;width:1568px;height:1px;background:#6a6a6a"></div>
<div class="a" style="left:0px;top:1005px;width:1920px;height:25px;background:#f0f0f0"></div>
<div class="a" style="left:0px;top:1006px;width:1920px;height:1px;background:#dadada"></div>
<div class="a" style="left:129px;top:1007px;width:1px;height:21px;background:#d0d0d0"></div>
<div class="t" style="left:133.0px;top:1012.0px;width:609px;overflow-x:clip;overflow-y:visible;font-size:12px;color:#000;font-weight:400;transform:scaleX(0.9774);transform-origin:0 0;">[ドラッグ前] Ctrl : 定規選択 / Alt : スポイト / Ctrl + Shift : 選択に追加(定規選択) / Ctrl + Alt : ドラッグでサイズ変更</div>
<svg class="a" style="left:5px;top:535px;" width="8" height="16" viewBox="0 0 8 16"><path d="M1 1L7 8L1 15z" fill="#000"/></svg>
<div class="a" style="left:0px;top:1030px;width:1920px;height:50px;background:#020b1e"></div>
<div class="a" style="left:0px;top:1030px;width:60px;height:50px;background:#000814"></div>
<svg class="a" style="left:20px;top:1045px;" width="20" height="20" viewBox="0 0 20 20"><path d="M0 2.8L8.2 1.6V9.4H0zM9.2 1.5L20 0V9.4H9.2zM0 10.4H8.2V18.3L0 17.2zM9.2 10.4H20V20L9.2 18.5z" fill="#fff"/></svg>
<div class="a" style="left:60px;top:1030px;width:430px;height:50px;background:#f0f0f0"></div>
<svg class="a" style="left:72px;top:1042px;" width="26" height="26" viewBox="0 0 26 26"><circle cx="13" cy="13" r="10.5" fill="none" stroke="#111" stroke-width="3"/></svg>
<div class="t" style="left:110.0px;top:1046.5px;width:155px;overflow-x:clip;overflow-y:visible;font-size:17px;color:#444;font-weight:400;transform:scaleX(0.8824);transform-origin:0 0;">ここに入力して検索</div>
<svg class="a" style="left:456px;top:1044px;" width="16" height="22" viewBox="0 0 16 22"><rect x="5" y="1" width="6" height="12" rx="3" fill="none" stroke="#333" stroke-width="1.5"/><path d="M2 9q0 6 6 6t6-6M8 15v4M5 20h6" fill="none" stroke="#333" stroke-width="1.5"/></svg>
<svg class="a" style="left:507px;top:1045px;" width="26" height="20" viewBox="0 0 26 20"><rect x="6" y="2" width="14" height="16" fill="none" stroke="#fff" stroke-width="1.5"/><path d="M2 5v10M24 5v10" stroke="#fff" stroke-width="1.5"/></svg>
<svg class="a" style="left:570px;top:1040px;" width="30" height="30" viewBox="0 0 30 30"><path d="M4 17C4 8 10 3 17 3c7 0 11 5 11 11H10c0 5 4 8 9 8 3 0 6-1 8-2v5c-2 1-5 2-9 2C10 27 4 23 4 17z" fill="#1a78dc"/><path d="M10 11h11c0-3-2-5-5-5s-6 2-6 5z" fill="#020b1e"/></svg>
<div class="a" style="left:559px;top:1077px;width:51px;height:3px;background:#76b9ed"></div>
<svg class="a" style="left:632px;top:1041px;" width="28" height="26" viewBox="0 0 28 26"><path d="M1 4h9l2 3h15v18H1z" fill="#f8d070"/><path d="M1 9h26v16H1z" fill="#fce08a"/><rect x="7" y="15" width="14" height="4" fill="#2a8ae0"/><rect x="9" y="19" width="3" height="5" fill="#2a8ae0"/><rect x="16" y="19" width="3" height="5" fill="#2a8ae0"/></svg>
<svg class="a" style="left:693px;top:1040px;" width="30" height="30" viewBox="0 0 30 30"><path d="M10 9V6a5 5 0 0 1 10 0v3" fill="none" stroke="#fff" stroke-width="1.5"/><rect x="1" y="9" width="28" height="20" fill="#fff"/><rect x="8" y="12" width="6" height="6" fill="#f25022"/><rect x="16" y="12" width="6" height="6" fill="#7fba00"/><rect x="8" y="20" width="6" height="6" fill="#00a4ef"/><rect x="16" y="20" width="6" height="6" fill="#ffb900"/></svg>
<svg class="a" style="left:755px;top:1041px;" width="30" height="28" viewBox="0 0 30 28"><path d="M1 10L15 2l14 8v15H1z" fill="#fff"/><path d="M1 10l14 9 14-9" fill="none" stroke="#020b1e" stroke-width="2"/><path d="M15 19l-5 6h5z" fill="#020b1e"/></svg>
<svg class="a" style="left:818px;top:1041px;" width="28" height="28" viewBox="0 0 28 28"><path d="M8 2h18l-6 24H2z" fill="#bfe4f4"/><path d="M8 2h18l-1 4H7z" fill="#4a90c0"/><path d="M20 26l6-24" stroke="#999"/></svg>
<svg class="a" style="left:878px;top:1040px;" width="30" height="30" viewBox="0 0 30 30"><circle cx="15" cy="15" r="13" fill="#f0a800"/><path d="M15 7l-7 13h14z" fill="none" stroke="#222" stroke-width="3"/><path d="M13 17l2-3 2 3" fill="none" stroke="#222" stroke-width="2"/></svg>
<div class="a" style="left:926px;top:1030px;width:61px;height:50px;background:#2c3648"></div>
<div class="a" style="left:926px;top:1077px;width:61px;height:3px;background:#76b9ed"></div>
<svg class="a" style="left:940px;top:1040px;" width="32" height="30" viewBox="0 0 32 30"><rect x="0" y="0" width="32" height="30" fill="#e8e8e8"/><rect x="2" y="4" width="28" height="22" rx="7" fill="#c8b890"/><rect x="6" y="6" width="10" height="16" rx="4" fill="#f0e8d0" opacity=".7"/><rect x="0" y="0" width="32" height="3" fill="#999"/></svg>
<svg class="a" style="left:1002px;top:1040px;" width="30" height="30" viewBox="0 0 30 30"><rect width="30" height="30" fill="#d8d8d8"/><path d="M9 18a6 6 0 0 1 6-9h4a6 6 0 0 1 0 12h-6a4 4 0 0 1 0-8h6" fill="none" stroke="#777" stroke-width="2.5"/></svg>
<div class="a" style="left:993px;top:1077px;width:51px;height:3px;background:#76b9ed"></div>
<svg class="a" style="left:1064px;top:1040px;" width="30" height="30" viewBox="0 0 30 30"><rect width="30" height="30" fill="#d8d8d8"/><path d="M9 14a7 6 0 1 1 9 5l-4 2v4M9 14q5 1 8-2" fill="none" stroke="#222" stroke-width="3"/></svg>
<div class="a" style="left:1055px;top:1077px;width:51px;height:3px;background:#76b9ed"></div>
<svg class="a" style="left:1533px;top:1043px;" width="22" height="22" viewBox="0 0 22 22"><circle cx="8" cy="9" r="3.5" fill="none" stroke="#fff" stroke-width="1.3"/><path d="M2 20q1-7 6-7t6 7" fill="none" stroke="#fff" stroke-width="1.3"/><circle cx="15" cy="5" r="3" fill="none" stroke="#fff" stroke-width="1.3"/><path d="M12 11q6-1 8 5" fill="none" stroke="#fff" stroke-width="1.3"/></svg>
<svg class="a" style="left:1580px;top:1047px;" width="18" height="12" viewBox="0 0 18 12"><path d="M2 10l7-7 7 7" fill="none" stroke="#fff" stroke-width="1.4"/></svg>
<svg class="a" style="left:1608px;top:1048px;" width="24" height="14" viewBox="0 0 24 14"><rect x="1" y="2" width="19" height="10" fill="none" stroke="#fff" stroke-width="1.3"/><rect x="3" y="4" width="11" height="6" fill="#fff"/><rect x="20" y="5" width="2" height="4" fill="#fff"/></svg>
<svg class="a" style="left:1637px;top:1043px;" width="26" height="22" viewBox="0 0 26 22"><rect x="1" y="1" width="5" height="7" fill="none" stroke="#fff"/><rect x="5" y="5" width="17" height="11" fill="none" stroke="#fff" stroke-width="1.3"/><path d="M13 16v4M8 20h10" stroke="#fff" stroke-width="1.3"/></svg>
<svg class="a" style="left:1667px;top:1044px;" width="26" height="22" viewBox="0 0 26 22"><path d="M2 8h4l5-5v16l-5-5H2z" fill="none" stroke="#fff" stroke-width="1.3"/><path d="M14 7q2 4 0 8M17 5q4 6 0 12M20 3q5 8 0 16" fill="none" stroke="#fff" stroke-width="1.1"/></svg>
<svg class="a" style="left:1701px;top:1042px;" width="26" height="26" viewBox="0 0 26 26"><path d="M4 22L18 5q3-2 4 1L8 22z" fill="none" stroke="#fff" stroke-width="1.4"/><path d="M3 14q5-6 9 0t9-4" fill="none" stroke="#fff" stroke-width="1.2"/></svg>
<div class="t" style="left:1740.5px;top:1044.0px;width:17px;overflow-x:clip;overflow-y:visible;font-size:22px;color:#fff;font-weight:400;transform:scaleX(1.0213);transform-origin:0 0;">A</div>
<div class="t" style="left:1788.2px;top:1036.5px;width:40px;overflow-x:clip;overflow-y:visible;font-size:15px;color:#fff;font-weight:400;">16:05</div>
<div class="t" style="left:1770.0px;top:1059.5px;width:76px;overflow-x:clip;overflow-y:visible;font-size:15px;color:#fff;font-weight:400;">2017/12/11</div>
<svg class="a" style="left:1866px;top:1043px;" width="26" height="24" viewBox="0 0 26 24"><path d="M2 2h22v16H12l-5 5v-5H2z" fill="none" stroke="#fff" stroke-width="1.4"/></svg>
<div class="a" style="left:239px;top:131px;width:212px;height:285px;background:#f0f0f0;box-shadow:0 0 7px 1px rgba(0,0,0,.28);border:1px solid #d4d4d4"></div>
<div class="a" style="left:240px;top:132px;width:210px;height:32px;background:#fff"></div>
<div class="t" style="left:244.0px;top:139.5px;width:156px;overflow-x:clip;overflow-y:visible;font-size:15px;color:#a09a94;font-weight:400;transform:scaleX(0.7265);transform-origin:0 0;">ペン ツールオプション</div>
<div class="a" style="left:425px;top:134px;width:25px;height:25px;background:#e3e3e3"></div>
<svg class="a" style="left:432px;top:141px;" width="11" height="11" viewBox="0 0 11 11"><path d="M1 1L10 10M10 1L1 10" stroke="#f8f8f8" stroke-width="1.3"/></svg>
<svg class="a" style="left:246px;top:168px;" width="20" height="20" viewBox="0 0 20 20"><path d="M1 19.5L4.5 12.5Q7 8 11.5 6.5L14 9Q12.5 13.5 8 16z" fill="#d8d8d8" stroke="#3a3a3a" stroke-width="1.1"/><path d="M1 19.5L7.5 12.5" stroke="#333" stroke-width="1"/><circle cx="7.8" cy="12.2" r="1.2" fill="#333"/><path d="M11 5.5l4.5-4.5 4 4-4.5 4.5z" fill="#d4a870" stroke="#7a5530" stroke-width="1"/></svg>
<div class="a" style="left:269px;top:168px;width:152px;height:21px;background:#ededed;border:1px solid #7a7a7a"></div>
<div class="t" style="left:339.9px;top:172.0px;width:12px;overflow-x:clip;overflow-y:visible;font-size:13px;color:#000;font-weight:400;">G</div>
<svg class="a" style="left:426px;top:169px;" width="16" height="17" viewBox="0 0 16 17"><path d="M1 4l4 4-4 4z" fill="#111"/><rect x="6" y="2" width="8" height="13" fill="#fff" stroke="#333" stroke-width="1.2"/><path d="M8 6h4M8 9h4M8 12h4" stroke="#444"/></svg>
<div class="a" style="left:242px;top:196px;width:207px;height:52px;background:#fff;border:1px solid #7a7a7a"></div>
<svg class="a" style="left:243px;top:197px;" width="205" height="50" viewBox="0 0 205 50"><path d="M4 28C25 19 44 14 64 14C95 14 115 26.5 140 26.5C160 26.5 178 22 192 18.6C178 25 160 33 135 33C110 33 90 25 64 25C45 25 30 31 11 37C5 39 1 31 4 28z" fill="#000"/></svg>
<svg class="a" style="left:242px;top:262px;" width="10" height="6" viewBox="0 0 10 6"><path d="M0 0h10L5 6z" fill="#777"/></svg>
<svg class="a" style="left:239px;top:256px;" width="212" height="18" viewBox="0 0 212 18"><path d="M0 16.5H20.5V0.5H51.5L66 16.5H212" fill="none" stroke="#888"/><path d="M20.5 16.5V0.5H51.5L66 16.5z" fill="#f0f0f0"/><path d="M20.5 16.5V0.5H51.5L66 16.5" fill="none" stroke="#888"/><path d="M56 6.5L58.5 0.5H103.5L111 9" fill="none" stroke="#888"/><path d="M110.5 16.5V0.5H140.5L155.5 16.5" fill="none" stroke="#888"/><path d="M0 16.5H212" stroke="#888"/><path d="M21 16.5H65" stroke="#f0f0f0"/></svg>
<div class="t" style="left:263.0px;top:258.5px;width:28px;overflow-x:clip;overflow-y:visible;font-size:13px;color:#000;font-weight:700;transform:scaleX(1.1538);transform-origin:0 0;">一般</div>
<div class="t" style="left:303.0px;top:259.0px;width:50px;overflow-x:clip;overflow-y:visible;font-size:12px;color:#000;font-weight:400;transform:scaleX(0.7708);transform-origin:0 0;">ベクター</div>
<div class="t" style="left:353.0px;top:258.5px;width:28px;overflow-x:clip;overflow-y:visible;font-size:13px;color:#000;font-weight:400;transform:scaleX(0.8846);transform-origin:0 0;">形状</div>
<svg class="a" style="left:246px;top:279px;" width="17" height="17" viewBox="0 0 17 17"><defs><radialGradient id="gg" cx=".4" cy=".35" r=".7"><stop offset="0" stop-color="#8ef08e"/><stop offset=".5" stop-color="#1fa51f"/><stop offset="1" stop-color="#0a4a0a"/></radialGradient></defs><circle cx="8.5" cy="8.5" r="7.5" fill="url(#gg)" stroke="#333" stroke-width=".8"/></svg>
<div class="t" style="left:266.0px;top:281.5px;width:41px;overflow-x:clip;overflow-y:visible;font-size:12px;color:#000;font-weight:400;transform:scaleX(0.8133);transform-origin:0 0;">サイズ:</div>
<div class="t" style="left:262.0px;top:305.5px;width:53px;overflow-x:clip;overflow-y:visible;font-size:12px;color:#000;font-weight:400;transform:scaleX(0.9738);transform-origin:0 0;">不透明度:</div>
<div class="a" style="left:318px;top:278px;width:53px;height:20px;background:#fff;border:1px solid #7a7a7a"></div>
<div class="t" style="left:323.0px;top:282.5px;width:45px;overflow-x:clip;overflow-y:visible;font-size:11px;color:#000;font-weight:400;transform:scaleX(0.9346);transform-origin:0 0;">1.80 mm</div>
<svg class="a" style="left:379px;top:283px;" width="6" height="10" viewBox="0 0 6 10"><path d="M0 0L6 5L0 10z" fill="#000"/></svg>
<div class="a" style="left:318px;top:302px;width:53px;height:20px;background:#fff;border:1px solid #7a7a7a"></div>
<div class="t" style="left:323.0px;top:306.5px;width:33px;overflow-x:clip;overflow-y:visible;font-size:11px;color:#000;font-weight:400;transform:scaleX(0.8653);transform-origin:0 0;">100 %</div>
<svg class="a" style="left:379px;top:307px;" width="6" height="10" viewBox="0 0 6 10"><path d="M0 0L6 5L0 10z" fill="#000"/></svg>
<div class="a" style="left:318px;top:336px;width:53px;height:20px;background:#fff;border:1px solid #7a7a7a"></div>
<div class="t" style="left:323.0px;top:340.5px;width:45px;overflow-x:clip;overflow-y:visible;font-size:11px;color:#000;font-weight:400;transform:scaleX(0.9346);transform-origin:0 0;">5.00 mm</div>
<svg class="a" style="left:379px;top:341px;" width="6" height="10" viewBox="0 0 6 10"><path d="M0 0L6 5L0 10z" fill="#000"/></svg>
<div class="a" style="left:250px;top:339px;width:16px;height:16px;background:#fff;border:1px solid #333"></div>
<div class="t" style="left:269.0px;top:340.0px;width:29px;overflow-x:clip;overflow-y:visible;font-size:12px;color:#000;font-weight:400;transform:scaleX(0.9509);transform-origin:0 0;">入り:</div>
<div class="a" style="left:318px;top:362px;width:53px;height:20px;background:#fff;border:1px solid #7a7a7a"></div>
<div class="t" style="left:323.0px;top:366.5px;width:45px;overflow-x:clip;overflow-y:visible;font-size:11px;color:#000;font-weight:400;transform:scaleX(0.9346);transform-origin:0 0;">2.00 mm</div>
<svg class="a" style="left:379px;top:367px;" width="6" height="10" viewBox="0 0 6 10"><path d="M0 0L6 5L0 10z" fill="#000"/></svg>
<div class="a" style="left:250px;top:365px;width:16px;height:16px;background:#fff;border:1px solid #333"></div>
<svg class="a" style="left:251px;top:366px;" width="14" height="14" viewBox="0 0 14 14"><path d="M2.5 7l3.5 4 6-8" fill="none" stroke="#333" stroke-width="1.2"/></svg>
<div class="t" style="left:269.0px;top:366.0px;width:29px;overflow-x:clip;overflow-y:visible;font-size:12px;color:#000;font-weight:400;transform:scaleX(0.9509);transform-origin:0 0;">抜き:</div>
<div class="a" style="left:318px;top:387px;width:53px;height:20px;background:#fff;border:1px solid #7a7a7a"></div>
<div class="t" style="left:323.0px;top:391.5px;width:17px;overflow-x:clip;overflow-y:visible;font-size:11px;color:#000;font-weight:400;transform:scaleX(0.9152);transform-origin:0 0;">0.4</div>
<svg class="a" style="left:379px;top:392px;" width="6" height="10" viewBox="0 0 6 10"><path d="M0 0L6 5L0 10z" fill="#000"/></svg>
<div class="a" style="left:250px;top:390px;width:16px;height:16px;background:#fff;border:1px solid #333"></div>
<svg class="a" style="left:251px;top:391px;" width="14" height="14" viewBox="0 0 14 14"><path d="M2.5 7l3.5 4 6-8" fill="none" stroke="#333" stroke-width="1.2"/></svg>
<div class="t" style="left:269.0px;top:391.0px;width:29px;overflow-x:clip;overflow-y:visible;font-size:12px;color:#000;font-weight:400;transform:scaleX(0.9509);transform-origin:0 0;">補正:</div>
<div class="a" style="left:396px;top:278px;width:52px;height:52px;background:#fff;border:1px solid #7a7a7a"></div>
<div class="a" style="left:419px;top:302px;width:5px;height:5px;background:#000;border-radius:50%"></div>
<div class="a" style="left:397px;top:346px;width:21px;height:22px;background:#cce4f7;border:1px solid #99c9ef"></div>
<svg class="a" style="left:398px;top:347px;" width="19" height="20" viewBox="0 0 19 20"><path d="M2 13Q5 6 10 8T18 3L17 7Q14 12 10 11T3 16z" fill="#2a2a2a"/><path d="M4 18l4-8 3 2z" fill="#ddd" stroke="#333" stroke-width=".9"/><path d="M9 10l5-6 2 2-5 6z" fill="#eee" stroke="#333" stroke-width=".9"/></svg>
<svg class="a" style="left:426px;top:338px;" width="16" height="16" viewBox="0 0 16 16"><path d="M1.5 1.5h6l3 3v4H1.5z" fill="#fff" stroke="#333" stroke-width="1.1"/><path d="M8.5 9.5h5v5h-5z" fill="#fff" stroke="#333" stroke-width="1.1"/><path d="M3.5 5q3 0 4 3t4 3" fill="none" stroke="#222" stroke-width="1.6"/></svg>
<svg class="a" style="left:425px;top:362px;" width="17" height="17" viewBox="0 0 17 17"><path d="M1 2.5h7l4 5v8" fill="none" stroke="#222" stroke-width="1.8"/><path d="M1 1.5h14.5v14" fill="none" stroke="#222" stroke-width="1.2" stroke-dasharray="2 1.5"/></svg>
<svg class="a" style="left:398px;top:388px;" width="18" height="18" viewBox="0 0 18 18"><path d="M2 15l5-12 2 1-4 11z" fill="#eee" stroke="#333" stroke-width="1"/><path d="M8 9l3-2 5 6v4h-6z" fill="#fff" stroke="#333" stroke-width="1"/></svg>
<div class="a" style="left:423px;top:386px;width:21px;height:22px;background:#cce4f7;border:1px solid #99c9ef"></div>
<svg class="a" style="left:424px;top:387px;" width="20" height="20" viewBox="0 0 20 20"><circle cx="7" cy="6" r="4" fill="#b0e8f0" stroke="#333" stroke-width="1.4"/><path d="M5 10l-2 8" stroke="#666" stroke-width="1.2"/><path d="M9 8l3 4 5 2v4h-7l-2-4z" fill="#fff" stroke="#333" stroke-width="1"/></svg>
<div class="a" style="left:110px;top:302px;width:106px;height:311px;background:#f0f0f0;box-shadow:0 0 7px 1px rgba(0,0,0,.28);border:1px solid #d4d4d4"></div>
<div class="a" style="left:111px;top:303px;width:104px;height:32px;background:#fff"></div>
<div class="a" style="left:190px;top:305px;width:25px;height:25px;background:#e3e3e3"></div>
<svg class="a" style="left:197px;top:312px;" width="11" height="11" viewBox="0 0 11 11"><path d="M1 1L10 10M10 1L1 10" stroke="#f8f8f8" stroke-width="1.3"/></svg>
<svg class="a" style="left:112px;top:337px;" width="22" height="22" viewBox="0 0 22 22"><rect x="3" y="5" width="15" height="12" fill="none" stroke="#222" stroke-width="1.4" stroke-dasharray="3 2"/></svg>
<svg class="a" style="left:130px;top:354px;" width="5" height="5" viewBox="0 0 5 5"><path d="M5 0V5H0z" fill="#000"/></svg>
<svg class="a" style="left:139px;top:337px;" width="22" height="22" viewBox="0 0 22 22"><ellipse cx="12" cy="9" rx="9" ry="6" fill="none" stroke="#5a4a40" stroke-width="1.3"/><path d="M6 14q-3 4 2 5" fill="none" stroke="#5a4a40" stroke-width="1.3"/></svg>
<svg class="a" style="left:157px;top:354px;" width="5" height="5" viewBox="0 0 5 5"><path d="M5 0V5H0z" fill="#000"/></svg>
<svg class="a" style="left:165px;top:337px;" width="22" height="22" viewBox="0 0 22 22"><path d="M8 8l11 9" stroke="#555" stroke-width="1.6"/><path d="M7 2l1 4 4-1-3 3 3 3-4-1-1 4-1-4-4 1 3-3-3-3 4 1z" fill="#fff" stroke="#333" stroke-width=".8"/></svg>
<svg class="a" style="left:183px;top:354px;" width="5" height="5" viewBox="0 0 5 5"><path d="M5 0V5H0z" fill="#000"/></svg>
<svg class="a" style="left:191px;top:337px;" width="22" height="22" viewBox="0 0 22 22"><path d="M3 19V3h16" fill="none" stroke="#555" stroke-width="1"/><circle cx="3" cy="3" r="1.8" fill="#fff" stroke="#555"/><path d="M10 8l9 7-5 0-3 4z" fill="#222"/></svg>
<svg class="a" style="left:112px;top:362px;" width="22" height="22" viewBox="0 0 22 22"><path d="M2 8l8-4 8 4-8 4z" fill="#fff" stroke="#333" stroke-width=".9"/><path d="M2 11l8 4 6-3M2 14l8 4 5-2" fill="none" stroke="#666" stroke-width=".9"/><path d="M13 10l6 6-3 0 2 4-2 1-2-4-2 2z" fill="#111"/></svg>
<svg class="a" style="left:139px;top:362px;" width="22" height="22" viewBox="0 0 22 22"><path d="M3 19l12-12 3 3-12 12z" fill="#eee" stroke="#333" stroke-width="1.2"/><path d="M14 6l4-4 3 3-4 4z" fill="#222"/></svg>
<svg class="a" style="left:165px;top:362px;" width="22" height="22" viewBox="0 0 22 22"><path d="M4 5h14v4M4 9l14 4M4 13h14v4H4z" fill="none" stroke="#555" stroke-width="1.5"/><path d="M4 5v4" stroke="#555" stroke-width="1.5"/></svg>
<svg class="a" style="left:183px;top:379px;" width="5" height="5" viewBox="0 0 5 5"><path d="M5 0V5H0z" fill="#000"/></svg>
<svg class="a" style="left:191px;top:362px;" width="22" height="22" viewBox="0 0 22 22"><path d="M11 2l3 4h-2v4h4V8l4 3-4 3v-2h-4v4h2l-3 4-3-4h2v-4H6v2l-4-3 4-3v2h4V6H8z" fill="#222"/></svg>
<svg class="a" style="left:112px;top:387px;" width="22" height="22" viewBox="0 0 22 22"><rect x="3" y="3" width="16" height="17" fill="#eee" stroke="#443" stroke-width="1.3"/><path d="M3 9h16M3 14h16M8 9v11M13 9v11" stroke="#554" stroke-width="1"/></svg>
<svg class="a" style="left:139px;top:387px;" width="22" height="22" viewBox="0 0 22 22"><path d="M3 7l6-4 7 3v7l-7 4-6-4z" fill="#fff" stroke="#444" stroke-width="1"/><path d="M3 7l7 3 6-4M10 10v7" fill="none" stroke="#444" stroke-width=".8"/><path d="M12 11l7 6h-3l2 4-2 1-2-4-2 2z" fill="#111"/></svg>
<div class="a" style="left:113px;top:413px;width:100px;height:1px;background:#a0a0a0"></div>
<div class="a" style="left:112px;top:417px;width:24px;height:23px;background:#cce4f7;border:1px solid #99c9ef"></div>
<svg class="a" style="left:112px;top:418px;" width="22" height="22" viewBox="0 0 22 22"><path d="M3 20l8-9 3 3z" fill="#444"/><path d="M3 20l6-6" stroke="#fff" stroke-width=".7"/><path d="M10 10l6-6 3 3-6 6z" fill="#eee" stroke="#333"/><path d="M15 5l3-3 3 3-3 3z" fill="#d0a070" stroke="#6a4a20"/></svg>
<svg class="a" style="left:130px;top:435px;" width="5" height="5" viewBox="0 0 5 5"><path d="M5 0V5H0z" fill="#000"/></svg>
<svg class="a" style="left:139px;top:418px;" width="22" height="22" viewBox="0 0 22 22"><path d="M3 19l2-5 11-11 3 3-11 11z" fill="#40a0e8" stroke="#224" stroke-width="1"/><path d="M3 19l2-5 3 3z" fill="#e8c890"/></svg>
<svg class="a" style="left:157px;top:435px;" width="5" height="5" viewBox="0 0 5 5"><path d="M5 0V5H0z" fill="#000"/></svg>
<svg class="a" style="left:165px;top:418px;" width="22" height="22" viewBox="0 0 22 22"><path d="M3 19l3-6 9-9 4 4-9 9z" fill="#aaa" stroke="#222" stroke-width="1"/><path d="M3 19l3-6 3 3z" fill="#111"/><path d="M12 7l4 4" stroke="#333" stroke-width="2"/></svg>
<svg class="a" style="left:183px;top:435px;" width="5" height="5" viewBox="0 0 5 5"><path d="M5 0V5H0z" fill="#000"/></svg>
<svg class="a" style="left:191px;top:418px;" width="22" height="22" viewBox="0 0 22 22"><path d="M3 14l10-10 7 5-10 10z" fill="#fff" stroke="#333" stroke-width="1"/><path d="M13 4l7 5-4 4-7-5z" fill="#1a6ae0"/></svg>
<svg class="a" style="left:209px;top:435px;" width="5" height="5" viewBox="0 0 5 5"><path d="M5 0V5H0z" fill="#000"/></svg>
<svg class="a" style="left:112px;top:443px;" width="22" height="22" viewBox="0 0 22 22"><path d="M3 20q0-7 6-7 2 2 0 5q-3 2-6 2z" fill="#222"/><path d="M9 13l9-10 2 2-9 10z" fill="#d0a070" stroke="#333" stroke-width=".8"/></svg>
<svg class="a" style="left:130px;top:460px;" width="5" height="5" viewBox="0 0 5 5"><path d="M5 0V5H0z" fill="#000"/></svg>
<svg class="a" style="left:139px;top:443px;" width="22" height="22" viewBox="0 0 22 22"><path d="M4 17q0-5 5-5 2 2 0 4q-3 1-5 1z" fill="#222"/><path d="M9 12l8-9 2 2-8 9z" fill="#d0a070" stroke="#333" stroke-width=".8"/><path d="M13 15l1 2 2 0-2 1 1 2-2-1-2 1 1-2-2-1 2 0z" fill="#222"/></svg>
<svg class="a" style="left:157px;top:460px;" width="5" height="5" viewBox="0 0 5 5"><path d="M5 0V5H0z" fill="#000"/></svg>
<svg class="a" style="left:165px;top:443px;" width="22" height="22" viewBox="0 0 22 22"><path d="M3 19q2-9 9-13l3 4q-5 6-12 9z" fill="#333"/><path d="M11 10h8v7q-4 3-8 0z" fill="#fff" stroke="#333" stroke-width="1.1"/></svg>
<svg class="a" style="left:183px;top:460px;" width="5" height="5" viewBox="0 0 5 5"><path d="M5 0V5H0z" fill="#000"/></svg>
<svg class="a" style="left:191px;top:443px;" width="22" height="22" viewBox="0 0 22 22"><rect x="3" y="8" width="10" height="11" fill="#fff" stroke="#222" stroke-width="1.5"/><path d="M4 18q2-7 8-11" stroke="#222" stroke-width="2" fill="none"/><path d="M12 8h8v7q-4 3-8 0z" fill="#fff" stroke="#333" stroke-width="1.1"/></svg>
<svg class="a" style="left:209px;top:460px;" width="5" height="5" viewBox="0 0 5 5"><path d="M5 0V5H0z" fill="#000"/></svg>
<svg class="a" style="left:112px;top:468px;" width="22" height="22" viewBox="0 0 22 22"><defs><linearGradient id="grd" x1="0" x2="1"><stop offset="0" stop-color="#fff"/><stop offset="1" stop-color="#111"/></linearGradient></defs><rect x="3" y="4" width="16" height="14" fill="url(#grd)"/></svg>
<svg class="a" style="left:130px;top:485px;" width="5" height="5" viewBox="0 0 5 5"><path d="M5 0V5H0z" fill="#000"/></svg>
<div class="t" style="left:142.8px;top:470.0px;width:16px;overflow-x:clip;overflow-y:visible;font-size:20px;color:#111;font-weight:400;font-family:'Liberation Serif',serif;">A</div>
<svg class="a" style="left:157px;top:485px;" width="5" height="5" viewBox="0 0 5 5"><path d="M5 0V5H0z" fill="#000"/></svg>
<svg class="a" style="left:165px;top:468px;" width="22" height="22" viewBox="0 0 22 22"><path d="M3 4l16 15" stroke="#333" stroke-width="1.2"/></svg>
<svg class="a" style="left:183px;top:485px;" width="5" height="5" viewBox="0 0 5 5"><path d="M5 0V5H0z" fill="#000"/></svg>
<svg class="a" style="left:191px;top:468px;" width="22" height="22" viewBox="0 0 22 22"><rect x="3" y="5" width="15" height="12" fill="none" stroke="#332" stroke-width="1.5"/></svg>
<svg class="a" style="left:209px;top:485px;" width="5" height="5" viewBox="0 0 5 5"><path d="M5 0V5H0z" fill="#000"/></svg>
<div class="a" style="left:113px;top:494px;width:100px;height:1px;background:#a0a0a0"></div>
<svg class="a" style="left:112px;top:499px;" width="22" height="22" viewBox="0 0 22 22"><path d="M3 17l6-5M19 17l-6-5" stroke="#333"/><circle cx="3" cy="17" r="2" fill="#fff" stroke="#333"/><circle cx="19" cy="17" r="2" fill="#fff" stroke="#333"/><path d="M8 13q-2-6 4-10 5 1 4 6z" fill="#fff" stroke="#333" stroke-width="1.2"/></svg>
<svg class="a" style="left:130px;top:516px;" width="5" height="5" viewBox="0 0 5 5"><path d="M5 0V5H0z" fill="#000"/></svg>
<svg class="a" style="left:139px;top:499px;" width="22" height="22" viewBox="0 0 22 22"><path d="M2 13q0 7 8 7 8 0 10-6l-4-2q-2 4-6 3-3 0-3-3z" fill="#40c0e0" stroke="#334" stroke-width=".8"/><path d="M14 16q4-2 5-4" stroke="#e8d020" stroke-width="3"/><path d="M9 12l8-9 2 2-8 9z" fill="#fff" stroke="#333"/></svg>
<svg class="a" style="left:157px;top:516px;" width="5" height="5" viewBox="0 0 5 5"><path d="M5 0V5H0z" fill="#000"/></svg>
<svg class="a" style="left:165px;top:499px;" width="22" height="22" viewBox="0 0 22 22"><path d="M3 18h14" stroke="#111" stroke-width="2"/><path d="M9 15l8-11 3 2-8 11-3 1z" fill="#fff" stroke="#222" stroke-width="1"/></svg>
<svg class="a" style="left:183px;top:516px;" width="5" height="5" viewBox="0 0 5 5"><path d="M5 0V5H0z" fill="#000"/></svg>
<svg class="a" style="left:191px;top:499px;" width="22" height="22" viewBox="0 0 22 22"><path d="M8 10q-2-6 3-7 5 1 3 7z" fill="#eee" stroke="#333"/><rect x="3" y="10" width="16" height="5" fill="#ddd" stroke="#333"/><rect x="3" y="15" width="16" height="3" fill="#aaa" stroke="#333" stroke-width=".8"/></svg>
<svg class="a" style="left:209px;top:516px;" width="5" height="5" viewBox="0 0 5 5"><path d="M5 0V5H0z" fill="#000"/></svg>
<div class="a" style="left:113px;top:525px;width:100px;height:1px;background:#a0a0a0"></div>
<svg class="a" style="left:112px;top:529px;" width="22" height="22" viewBox="0 0 22 22"><path d="M6 19q-4-5-3-11l2 0 1 5V4l2-1 1 1v7V3h2l1 1v7V5h2l1 1v9q2-3 4-2-2 5-6 7z" fill="#eee" stroke="#333" stroke-width=".9"/></svg>
<svg class="a" style="left:130px;top:546px;" width="5" height="5" viewBox="0 0 5 5"><path d="M5 0V5H0z" fill="#000"/></svg>
<svg class="a" style="left:139px;top:529px;" width="22" height="22" viewBox="0 0 22 22"><circle cx="9" cy="9" r="6" fill="#c8f0f8" stroke="#333" stroke-width="1.8"/><path d="M13 13l6 6" stroke="#666" stroke-width="3"/></svg>
<div class="a" style="left:113px;top:556px;width:100px;height:1px;background:#a0a0a0"></div>
<div class="a" style="left:112px;top:560px;width:16px;height:24px;background:#000;border:2px solid #f00"></div>
<div class="a" style="left:129px;top:560px;width:16px;height:24px;background:#fff;border:1px solid #777"></div>
<div class="a" style="left:146px;top:560px;width:16px;height:24px;border:1px solid #777;background-color:#fff;background-image:linear-gradient(45deg,#ccc 25%,transparent 25%,transparent 75%,#ccc 75%),linear-gradient(45deg,#ccc 25%,transparent 25%,transparent 75%,#ccc 75%);background-size:8px 8px;background-position:0 0,4px 4px"></div>
<div class="a" style="left:163px;top:560px;width:50px;height:36px;background:#f0f0f0;border:1px solid #999"></div>
<div class="a" style="left:631px;top:255px;width:658px;height:519px;background:#f0f0f0;border:1px solid #2b87d8;box-shadow:0 7px 20px 1px rgba(0,0,0,.27)"></div>
<div class="a" style="left:632px;top:256px;width:656px;height:31px;background:#fff"></div>
<div class="t" style="left:635.0px;top:264.0px;width:62px;overflow-x:clip;overflow-y:visible;font-size:15px;color:#000;font-weight:400;transform:scaleX(0.9833);transform-origin:0 0;">環境設定</div>
<svg class="a" style="left:1260px;top:264px;" width="14" height="14" viewBox="0 0 14 14"><path d="M1 1L13 13M13 1L1 13" stroke="#111" stroke-width="1.1"/></svg>
<div class="a" style="left:644px;top:298px;width:144px;height:429px;background:#fff;border:1px solid #828790"></div>
<svg class="a" style="left:657px;top:305px;" width="12" height="2" viewBox="0 0 12 2"><path d="M1 1H11" stroke="#888" stroke-dasharray="1 1"/></svg>
<div class="t" style="left:670.0px;top:300.0px;width:26px;overflow-x:clip;overflow-y:visible;font-size:12px;color:#000;font-weight:400;transform:scaleX(0.9583);transform-origin:0 0;">作品</div>
<svg class="a" style="left:657px;top:319px;" width="12" height="2" viewBox="0 0 12 2"><path d="M1 1H11" stroke="#888" stroke-dasharray="1 1"/></svg>
<div class="t" style="left:670.0px;top:314.0px;width:38px;overflow-x:clip;overflow-y:visible;font-size:12px;color:#000;font-weight:400;transform:scaleX(0.9167);transform-origin:0 0;">ページ</div>
<svg class="a" style="left:657px;top:333px;" width="12" height="2" viewBox="0 0 12 2"><path d="M1 1H11" stroke="#888" stroke-dasharray="1 1"/></svg>
<div class="t" style="left:670.0px;top:328.0px;width:50px;overflow-x:clip;overflow-y:visible;font-size:12px;color:#000;font-weight:400;transform:scaleX(0.9167);transform-origin:0 0;">レイヤー</div>
<svg class="a" style="left:657px;top:347px;" width="12" height="2" viewBox="0 0 12 2"><path d="M1 1H11" stroke="#888" stroke-dasharray="1 1"/></svg>
<div class="t" style="left:670.0px;top:342.0px;width:38px;overflow-x:clip;overflow-y:visible;font-size:12px;color:#000;font-weight:400;transform:scaleX(0.9167);transform-origin:0 0;">ツール</div>
<svg class="a" style="left:657px;top:361px;" width="12" height="2" viewBox="0 0 12 2"><path d="M1 1H11" stroke="#888" stroke-dasharray="1 1"/></svg>
<div class="t" style="left:670.0px;top:356.0px;width:122px;overflow-x:clip;overflow-y:visible;font-size:12px;color:#000;font-weight:400;transform:scaleX(0.8583);transform-origin:0 0;">印刷・出力・スキャン</div>
<svg class="a" style="left:657px;top:375px;" width="12" height="2" viewBox="0 0 12 2"><path d="M1 1H11" stroke="#888" stroke-dasharray="1 1"/></svg>
<div class="t" style="left:670.0px;top:370.0px;width:38px;overflow-x:clip;overflow-y:visible;font-size:12px;color:#000;font-weight:400;transform:scaleX(0.8333);transform-origin:0 0;">メモリ</div>
<svg class="a" style="left:657px;top:389px;" width="12" height="2" viewBox="0 0 12 2"><path d="M1 1H11" stroke="#888" stroke-dasharray="1 1"/></svg>
<div class="a" style="left:668px;top:384px;width:102px;height:14px;background:#0078d7"></div>
<div class="t" style="left:670.0px;top:384.0px;width:122px;overflow-x:clip;overflow-y:visible;font-size:12px;color:#fff;font-weight:400;transform:scaleX(0.8333);transform-origin:0 0;">タブレット・デバイス</div>
<svg class="a" style="left:657px;top:403px;" width="12" height="2" viewBox="0 0 12 2"><path d="M1 1H11" stroke="#888" stroke-dasharray="1 1"/></svg>
<div class="t" style="left:670.0px;top:398.0px;width:74px;overflow-x:clip;overflow-y:visible;font-size:12px;color:#000;font-weight:400;transform:scaleX(0.8889);transform-origin:0 0;">フォルダパス</div>
<svg class="a" style="left:657px;top:417px;" width="12" height="2" viewBox="0 0 12 2"><path d="M1 1H11" stroke="#888" stroke-dasharray="1 1"/></svg>
<div class="t" style="left:670.0px;top:412.0px;width:62px;overflow-x:clip;overflow-y:visible;font-size:12px;color:#000;font-weight:400;transform:scaleX(0.8333);transform-origin:0 0;">オプション</div>
<svg class="a" style="left:658px;top:306px;" width="2" height="112" viewBox="0 0 2 112"><path d="M1 0V112" stroke="#888" stroke-dasharray="1 1"/></svg>
<div class="a" style="left:653px;top:316px;width:11px;height:11px;background:#f4f4f4;border:1px solid #999"></div>
<svg class="a" style="left:654px;top:317px;" width="9" height="9" viewBox="0 0 9 9"><path d="M1 4.5H8M4.5 1V8" stroke="#2a4ab0" stroke-width="1.2"/></svg>
<div class="a" style="left:805px;top:309px;width:459px;height:69px;border:1px solid #dcdcdc"></div>
<div class="a" style="left:812px;top:300px;width:142px;height:16px;background:#f0f0f0"></div>
<div class="t" style="left:814.0px;top:302.5px;width:158px;overflow-x:clip;overflow-y:visible;font-size:12px;color:#000;font-weight:400;transform:scaleX(0.8782);transform-origin:0 0;">使用するタブレットサービス</div>
<svg class="a" style="left:881px;top:328px;" width="18" height="18" viewBox="0 0 18 18"><circle cx="9" cy="9" r="7.5" fill="#fff" stroke="#333" stroke-width="1"/><circle cx="9" cy="9" r="4.2" fill="#333"/></svg>
<div class="t" style="left:900.0px;top:330.5px;width:39px;overflow-x:clip;overflow-y:visible;font-size:12px;color:#000;font-weight:400;transform:scaleX(0.9101);transform-origin:0 0;">Wintab</div>
<svg class="a" style="left:1027px;top:328px;" width="18" height="18" viewBox="0 0 18 18"><circle cx="9" cy="9" r="7.5" fill="#fff" stroke="#333" stroke-width="1"/></svg>
<div class="t" style="left:1047.0px;top:330.5px;width:51px;overflow-x:clip;overflow-y:visible;font-size:12px;color:#000;font-weight:400;transform:scaleX(0.9445);transform-origin:0 0;">TabletPC</div>
<div class="a" style="left:882px;top:356px;width:16px;height:16px;background:#fff;border:1px solid #333"></div>
<div class="t" style="left:900.0px;top:357.5px;width:176px;overflow-x:clip;overflow-y:visible;font-size:12px;color:#000;font-weight:400;transform:scaleX(0.8793);transform-origin:0 0;">タブレット座標を使用しない(M)</div>
<div class="a" style="left:805px;top:391px;width:459px;height:47px;border:1px solid #dcdcdc"></div>
<div class="a" style="left:812px;top:382px;width:168px;height:16px;background:#f0f0f0"></div>
<div class="t" style="left:814.0px;top:384.5px;width:167px;overflow-x:clip;overflow-y:visible;font-size:12px;color:#000;font-weight:400;transform:scaleX(0.9917);transform-origin:0 0;">Tab-Mate Controllerの補正設定</div>
<div class="t" style="left:875.0px;top:406.5px;width:26px;overflow-x:clip;overflow-y:visible;font-size:12px;color:#000;font-weight:400;transform:scaleX(0.9583);transform-origin:0 0;">最小</div>
<div class="a" style="left:909px;top:410px;width:250px;height:5px;background:#e7eae7;border:1px solid #d6d6d6"></div>
<div class="a" style="left:969px;top:406px;width:6px;height:14px;background:#0078d7"></div>
<div class="t" style="left:1175.0px;top:406.5px;width:26px;overflow-x:clip;overflow-y:visible;font-size:12px;color:#000;font-weight:400;transform:scaleX(0.9583);transform-origin:0 0;">最大</div>
<svg class="a" style="left:849px;top:448px;" width="38" height="38" viewBox="0 0 38 38"><defs><radialGradient id="ig" cx=".45" cy=".3" r=".75"><stop offset="0" stop-color="#7aa8f0"/><stop offset=".6" stop-color="#2a5ac8"/><stop offset="1" stop-color="#1a3a98"/></radialGradient></defs><circle cx="19" cy="19" r="17.5" fill="#e8e8e8" stroke="#8a8a8a" stroke-width="1"/><circle cx="19" cy="19" r="15" fill="url(#ig)"/><circle cx="19" cy="11" r="2.6" fill="#fff"/><path d="M16.5 16h5v15h-5z" fill="#fff"/></svg>
<div class="t" style="left:893.0px;top:458.5px;width:302px;overflow-x:clip;overflow-y:visible;font-size:12px;color:#000;font-weight:400;transform:scaleX(0.9300);transform-origin:0 0;">変更内容はアプリケーション再起動後に有効になります</div>
<div class="a" style="left:644px;top:734px;width:631px;height:1px;background:#a0a0a0"></div>
<div class="a" style="left:644px;top:735px;width:631px;height:1px;background:#fff"></div>
<div class="a" style="left:645px;top:740px;width:86px;height:21px;background:#e1e1e1;border:1px solid #adadad"></div>
<div class="t" style="left:653.0px;top:744.5px;width:77px;overflow-x:clip;overflow-y:visible;font-size:12px;color:#000;font-weight:400;transform:scaleX(0.9374);transform-origin:0 0;">読み込み(R)...</div>
<div class="a" style="left:747px;top:740px;width:86px;height:21px;background:#e1e1e1;border:1px solid #adadad"></div>
<div class="t" style="left:756.5px;top:744.5px;width:79px;overflow-x:clip;overflow-y:visible;font-size:12px;color:#000;font-weight:400;transform:scaleX(0.8664);transform-origin:0 0;">書き出し(W)...</div>
<div class="a" style="left:1088px;top:740px;width:86px;height:21px;background:#e1e1e1;border:2px solid #0078d7"></div>
<div class="t" style="left:1123.5px;top:744.5px;width:19px;overflow-x:clip;overflow-y:visible;font-size:12px;color:#000;font-weight:400;transform:scaleX(0.8649);transform-origin:0 0;">OK</div>
<div class="a" style="left:1190px;top:740px;width:86px;height:21px;background:#e1e1e1;border:1px solid #adadad"></div>
<div class="t" style="left:1205.5px;top:744.5px;width:62px;overflow-x:clip;overflow-y:visible;font-size:12px;color:#000;font-weight:400;transform:scaleX(0.9167);transform-origin:0 0;">キャンセル</div>
<div class="a" style="left:1582px;top:82px;width:16px;height:923px;background:#f0f0f0"></div>
<div class="a" style="left:1582px;top:82px;width:2px;height:923px;background:#fff"></div>
<div class="a" style="left:1583px;top:1004px;width:16px;height:1px;background:#6a6a6a"></div>
<div class="a" style="left:1598px;top:82px;width:2px;height:923px;background:#6a6a6a"></div>
<div class="a" style="left:1599px;top:82px;width:321px;height:923px;background:#f0f0f0"></div>
<div class="a" style="left:1599px;top:82px;width:321px;height:18px;background:#e1e1e1;border-top:1px solid #7a7a7a;border-bottom:2px solid #7a7a7a;border-right:1px solid #7a7a7a"></div>
<div class="t" style="left:1603.0px;top:85.0px;width:134px;overflow-x:clip;overflow-y:visible;font-size:12px;color:#000;font-weight:400;transform:scaleX(0.7652);transform-origin:0 0;">ビギナーズアシスタント</div>
<svg class="a" style="left:1904px;top:85px;" width="12" height="12" viewBox="0 0 12 12"><path d="M2 2L10 10M10 2L2 10" stroke="#000" stroke-width="2.2"/></svg>
<svg class="a" style="left:1602px;top:101px;" width="20" height="20" viewBox="0 0 20 20"><path d="M1 19.5L4.5 12.5Q7 8 11.5 6.5L14 9Q12.5 13.5 8 16z" fill="#d8d8d8" stroke="#3a3a3a" stroke-width="1.1"/><path d="M1 19.5L7.5 12.5" stroke="#333" stroke-width="1"/><circle cx="7.8" cy="12.2" r="1.2" fill="#333"/><path d="M11 5.5l4.5-4.5 4 4-4.5 4.5z" fill="#d4a870" stroke="#7a5530" stroke-width="1"/></svg>
<div class="t" style="left:1713.0px;top:103.5px;width:145px;overflow-x:clip;overflow-y:visible;font-size:13px;color:#000;font-weight:700;transform:scaleX(0.8531);transform-origin:0 0;">編集レイヤー：レイヤー</div>
<div class="a" style="left:1838px;top:101px;width:40px;height:18px;background:#fff;border:1px solid #7a7a7a"></div>
<div class="t" style="left:1842.0px;top:104.5px;width:33px;overflow-x:clip;overflow-y:visible;font-size:11px;color:#000;font-weight:400;transform:scaleX(0.8653);transform-origin:0 0;">100 %</div>
<svg class="a" style="left:1888px;top:105px;" width="6" height="10" viewBox="0 0 6 10"><path d="M0 0L6 5L0 10z" fill="#000"/></svg>
<div class="a" style="left:1600px;top:120px;width:100px;height:24px;background:#b2b2fa;border-top:2px solid #7a7a7a;border-bottom:1px solid #7a7a7a;border-right:1px solid #7a7a7a"></div>
<div class="a" style="left:1603px;top:123px;width:19px;height:19px;background:#fafafa;border-right:1px solid #999;border-bottom:1px solid #999"></div>
<svg class="a" style="left:1605px;top:125px;" width="15" height="15" viewBox="0 0 15 15"><rect x="4.5" y="3.5" width="6" height="8" fill="#fff" stroke="#00e8f8" stroke-width="1.4"/><path d="M1 1h2M1 1v2M14 1h-2M14 1v2M1 14h2M1 14v-2M14 14h-2M14 14v-2" stroke="#0000ff" stroke-width="1.2"/></svg>
<div class="t" style="left:1628.0px;top:125.5px;width:67px;overflow-x:clip;overflow-y:visible;font-size:13px;color:#000;font-weight:400;transform:scaleX(0.8308);transform-origin:0 0;">ページ全体</div>
<svg class="a" style="left:1688px;top:127px;" width="6" height="10" viewBox="0 0 6 10"><path d="M0 0L6 5L0 10z" fill="#777"/></svg>
<div class="a" style="left:1701px;top:120px;width:1px;height:287px;background:#fff"></div>
<div class="a" style="left:1705px;top:120px;width:1px;height:287px;background:#7a7a7a"></div>
<div class="a" style="left:1899px;top:120px;width:1px;height:287px;background:#fff"></div>
<div class="a" style="left:1706px;top:120px;width:193px;height:24px;background:#9898f8;border-top:2px solid #7a7a7a;border-bottom:1px solid #7a7a7a;border-right:1px solid #7a7a7a"></div>
<svg class="a" style="left:1712px;top:127px;" width="14" height="10" viewBox="0 0 14 10"><ellipse cx="7" cy="5" rx="5.5" ry="3.5" fill="#ccc" stroke="#333" stroke-width="1.2"/><circle cx="7" cy="5" r="2" fill="#222"/></svg>
<div class="a" style="left:1730px;top:122px;width:19px;height:21px;background:#f4f4f4"></div>
<svg class="a" style="left:1731px;top:125px;" width="17" height="15" viewBox="0 0 17 15"><rect x="1.5" y="1.5" width="11" height="9" fill="#ddd" stroke="#999"/><rect x="4" y="4" width="11" height="9" fill="#fff" stroke="#2a5aa8" stroke-width="1.4"/></svg>
<div class="t" style="left:1756.0px;top:125.5px;width:54px;overflow-x:clip;overflow-y:visible;font-size:13px;color:#000;font-weight:700;transform:scaleX(0.7885);transform-origin:0 0;">レイヤー</div>
<svg class="a" style="left:1901px;top:102px;" width="16" height="16" viewBox="0 0 16 16"><path d="M2 8l6-5 6 5zM2 14l6-5 6 5z" fill="#b8b8b8"/></svg>
<svg class="a" style="left:1901px;top:119px;" width="16" height="12" viewBox="0 0 16 12"><path d="M2 9l6-5 6 5z" fill="#c0c0c0"/></svg>
<svg class="a" style="left:1901px;top:136px;" width="16" height="12" viewBox="0 0 16 12"><path d="M2 3l6 5 6-5z" fill="#c0c0c0"/></svg>
<svg class="a" style="left:1901px;top:151px;" width="16" height="16" viewBox="0 0 16 16"><path d="M2 2h12l-6 6zM2 8h12l-6 6z" fill="#000"/><path d="M2 14h12" stroke="#000" stroke-width="1.5"/></svg>
<div class="a" style="left:1900px;top:173px;width:20px;height:1px;background:#b0b0b0"></div>
<svg class="a" style="left:1901px;top:179px;" width="17" height="15" viewBox="0 0 17 15"><rect x="1.5" y="4.5" width="11" height="9" rx="1" fill="#fff" stroke="#222" stroke-width="1.3"/><path d="M13 1l1 3 3 0-2 2 1 3-3-2" stroke="#222" fill="none"/></svg>
<svg class="a" style="left:1901px;top:196px;" width="17" height="17" viewBox="0 0 17 17"><ellipse cx="8.5" cy="4" rx="6" ry="2.5" fill="#ddd"/><path d="M3 5h11l-2 11H5z" fill="#e4e4e4" stroke="#ccc"/></svg>
<div class="a" style="left:1599px;top:406px;width:321px;height:1px;background:#fff"></div>
<svg class="a" style="left:1599px;top:411px;" width="321" height="20" viewBox="0 0 321 20"><path d="M6.5 18.5V2.5H46.5L54 10.5" fill="#f0f0f0" stroke="#777"/><path d="M54.5 18.5V2.5H85L92 10.5" fill="#f0f0f0" stroke="#777"/><path d="M131.5 18.5V2.5H166L173 10.5" fill="#f0f0f0" stroke="#777"/><path d="M173.5 18.5V2.5H201L217 18.5" fill="#f0f0f0" stroke="#777"/><path d="M92.5 18.5V2.5H123L138 18.5" fill="#f0f0f0" stroke="#777"/><path d="M0 18.5H92M138 18.5H321" stroke="#777"/></svg>
<div class="t" style="left:1610.0px;top:416.0px;width:38px;overflow-x:clip;overflow-y:visible;font-size:12px;color:#000;font-weight:400;transform:scaleX(0.8889);transform-origin:0 0;">下描き</div>
<div class="t" style="left:1658.0px;top:416.0px;width:26px;overflow-x:clip;overflow-y:visible;font-size:12px;color:#000;font-weight:400;transform:scaleX(0.9583);transform-origin:0 0;">枠線</div>
<div class="t" style="left:1695.0px;top:416.0px;width:26px;overflow-x:clip;overflow-y:visible;font-size:12px;color:#000;font-weight:700;transform:scaleX(1.0417);transform-origin:0 0;">描画</div>
<div class="t" style="left:1734.0px;top:416.0px;width:38px;overflow-x:clip;overflow-y:visible;font-size:12px;color:#000;font-weight:400;transform:scaleX(0.7222);transform-origin:0 0;">トーン</div>
<div class="t" style="left:1776.0px;top:416.0px;width:26px;overflow-x:clip;overflow-y:visible;font-size:12px;color:#000;font-weight:400;transform:scaleX(0.9167);transform-origin:0 0;">文字</div>
<div class="a" style="left:1600px;top:430px;width:53px;height:35px;background:linear-gradient(#fff 0,#fff 48%,#f0f0f0 48%,#f0f0f0 100%)"></div>
<div class="a" style="left:1654px;top:430px;width:53px;height:35px;background:linear-gradient(#fff 0,#fff 48%,#f0f0f0 48%,#f0f0f0 100%)"></div>
<div class="a" style="left:1653px;top:432px;width:1px;height:32px;background:#b0b0b0"></div>
<div class="a" style="left:1708px;top:430px;width:53px;height:35px;background:linear-gradient(#fff 0,#fff 48%,#f0f0f0 48%,#f0f0f0 100%)"></div>
<div class="a" style="left:1707px;top:432px;width:1px;height:32px;background:#b0b0b0"></div>
<div class="a" style="left:1762px;top:430px;width:53px;height:35px;background:linear-gradient(#fff 0,#fff 48%,#f0f0f0 48%,#f0f0f0 100%)"></div>
<div class="a" style="left:1761px;top:432px;width:1px;height:32px;background:#b0b0b0"></div>
<div class="a" style="left:1816px;top:430px;width:53px;height:35px;background:linear-gradient(#fff 0,#fff 48%,#f0f0f0 48%,#f0f0f0 100%)"></div>
<div class="a" style="left:1815px;top:432px;width:1px;height:32px;background:#b0b0b0"></div>
<div class="a" style="left:1870px;top:430px;width:50px;height:35px;background:linear-gradient(#fff 0,#fff 48%,#f0f0f0 48%,#f0f0f0 100%)"></div>
<div class="a" style="left:1869px;top:432px;width:1px;height:32px;background:#b0b0b0"></div>
<div class="a" style="left:1599px;top:464px;width:321px;height:1px;background:#a8a8a8"></div>
<div class="a" style="left:1599px;top:465px;width:321px;height:1px;background:#d8d8d8"></div>
<div class="a" style="left:1600px;top:466px;width:53px;height:34px;background:linear-gradient(#fff 0,#fff 48%,#f0f0f0 48%,#f0f0f0 100%)"></div>
<div class="a" style="left:1654px;top:466px;width:53px;height:34px;background:linear-gradient(#fff 0,#fff 48%,#f0f0f0 48%,#f0f0f0 100%)"></div>
<div class="a" style="left:1653px;top:468px;width:1px;height:31px;background:#b0b0b0"></div>
<div class="a" style="left:1708px;top:466px;width:53px;height:34px;background:linear-gradient(#fff 0,#fff 48%,#f0f0f0 48%,#f0f0f0 100%)"></div>
<div class="a" style="left:1707px;top:468px;width:1px;height:31px;background:#b0b0b0"></div>
<div class="a" style="left:1762px;top:466px;width:53px;height:34px;background:linear-gradient(#fff 0,#fff 48%,#f0f0f0 48%,#f0f0f0 100%)"></div>
<div class="a" style="left:1761px;top:468px;width:1px;height:31px;background:#b0b0b0"></div>
<div class="a" style="left:1816px;top:466px;width:53px;height:34px;background:linear-gradient(#fff 0,#fff 48%,#f0f0f0 48%,#f0f0f0 100%)"></div>
<div class="a" style="left:1815px;top:468px;width:1px;height:31px;background:#b0b0b0"></div>
<div class="a" style="left:1870px;top:466px;width:50px;height:34px;background:linear-gradient(#fff 0,#fff 48%,#f0f0f0 48%,#f0f0f0 100%)"></div>
<div class="a" style="left:1869px;top:468px;width:1px;height:31px;background:#b0b0b0"></div>
<div class="a" style="left:1599px;top:499px;width:321px;height:1px;background:#a8a8a8"></div>
<div class="a" style="left:1599px;top:500px;width:321px;height:1px;background:#d8d8d8"></div>
<div class="a" style="left:1600px;top:501px;width:53px;height:31px;background:linear-gradient(#fff 0,#fff 48%,#f0f0f0 48%,#f0f0f0 100%)"></div>
<div class="a" style="left:1654px;top:501px;width:53px;height:31px;background:linear-gradient(#fff 0,#fff 48%,#f0f0f0 48%,#f0f0f0 100%)"></div>
<div class="a" style="left:1653px;top:503px;width:1px;height:28px;background:#b0b0b0"></div>
<div class="a" style="left:1708px;top:501px;width:53px;height:31px;background:linear-gradient(#fff 0,#fff 48%,#f0f0f0 48%,#f0f0f0 100%)"></div>
<div class="a" style="left:1707px;top:503px;width:1px;height:28px;background:#b0b0b0"></div>
<div class="a" style="left:1762px;top:501px;width:53px;height:31px;background:linear-gradient(#fff 0,#fff 48%,#f0f0f0 48%,#f0f0f0 100%)"></div>
<div class="a" style="left:1761px;top:503px;width:1px;height:28px;background:#b0b0b0"></div>
<div class="a" style="left:1816px;top:501px;width:53px;height:31px;background:linear-gradient(#fff 0,#fff 48%,#f0f0f0 48%,#f0f0f0 100%)"></div>
<div class="a" style="left:1815px;top:503px;width:1px;height:28px;background:#b0b0b0"></div>
<div class="a" style="left:1870px;top:501px;width:50px;height:31px;background:linear-gradient(#fff 0,#fff 48%,#f0f0f0 48%,#f0f0f0 100%)"></div>
<div class="a" style="left:1869px;top:503px;width:1px;height:28px;background:#b0b0b0"></div>
<div class="a" style="left:1599px;top:531px;width:321px;height:1px;background:#a8a8a8"></div>
<div class="a" style="left:1599px;top:532px;width:321px;height:1px;background:#d8d8d8"></div>
<div class="a" style="left:1600px;top:466px;width:53px;height:34px;background:linear-gradient(#4a4a4a,#a8a8a8)"></div>
<svg class="a" style="left:1611px;top:432px;" width="30" height="30" viewBox="0 0 30 30"><rect x="5" y="8" width="20" height="15" fill="none" stroke="#b5ad98" stroke-width="1.3" stroke-dasharray="1.5 2"/></svg>
<svg class="a" style="left:1665px;top:432px;" width="30" height="30" viewBox="0 0 30 30"><ellipse cx="16" cy="11" rx="11" ry="7" fill="none" stroke="#b5ad98" stroke-width="1.4"/><path d="M8 17q-5 3 0 7q4 0 2-4" fill="none" stroke="#b5ad98" stroke-width="1.4"/></svg>
<svg class="a" style="left:1719px;top:432px;" width="30" height="30" viewBox="0 0 30 30"><path d="M10 8l14 12" stroke="#b5ad98" stroke-width="2"/><path d="M9 2l1 4 4-1-3 3 4 2-4 1 1 4-3-3-2 4-1-4-4 1 3-3-3-2 4-1z" fill="#b5ad98"/></svg>
<svg class="a" style="left:1773px;top:432px;" width="30" height="30" viewBox="0 0 30 30"><path d="M4 6l22 18" stroke="#b5ad98" stroke-width="1.4"/></svg>
<svg class="a" style="left:1827px;top:432px;" width="30" height="30" viewBox="0 0 30 30"><rect x="5" y="6" width="20" height="18" fill="none" stroke="#b5ad98" stroke-width="1.6"/></svg>
<svg class="a" style="left:1881px;top:432px;" width="30" height="30" viewBox="0 0 30 30"><ellipse cx="15" cy="15" rx="12" ry="9" fill="none" stroke="#b5ad98" stroke-width="1.6"/></svg>
<svg class="a" style="left:1611px;top:468px;" width="30" height="30" viewBox="0 0 30 30"><path d="M3 26l12-14 5 4z" fill="none" stroke="#fff" stroke-width="1.4"/><path d="M15 12l8-8 5 4-8 8z" fill="none" stroke="#fff" stroke-width="1.4"/><path d="M22 3l6 6" stroke="#fff" stroke-width="1.5"/></svg>
<svg class="a" style="left:1665px;top:468px;" width="30" height="30" viewBox="0 0 30 30"><path d="M4 25l4-7 14-13 4 4-14 13z" fill="none" stroke="#b5ad98" stroke-width="1.4"/><path d="M4 25l4-7 4 4z" fill="#b5ad98"/></svg>
<svg class="a" style="left:1719px;top:468px;" width="30" height="30" viewBox="0 0 30 30"><path d="M14 14l9-10 4 4-10 9" fill="none" stroke="#b5ad98" stroke-width="1.4"/><path d="M14 14q-7 2-6 8 2 5 6 5" fill="none" stroke="#b5ad98" stroke-width="2.5"/></svg>
<svg class="a" style="left:1773px;top:468px;" width="30" height="30" viewBox="0 0 30 30"><path d="M14 14l9-10 4 4-10 9" fill="none" stroke="#b5ad98" stroke-width="1.4"/><path d="M14 14q-6 2-6 7" fill="none" stroke="#b5ad98" stroke-width="2.5"/><path d="M7 24l1 2 2 0-2 1 1 2-2-1-2 1 1-2-2-1 2 0zM13 22l1 2 2 0-2 1 1 2-2-1" fill="#b5ad98"/></svg>
<svg class="a" style="left:1827px;top:468px;" width="30" height="30" viewBox="0 0 30 30"><path d="M4 19l12-11 10 6-12 11z" fill="none" stroke="#b5ad98" stroke-width="1.4"/><path d="M16 8l10 6-3 3-10-6z" fill="#b5ad98"/></svg>
<svg class="a" style="left:1881px;top:468px;" width="30" height="30" viewBox="0 0 30 30"><path d="M4 27q3-12 12-17l4 5q-6 8-16 12z" fill="#b5ad98"/><path d="M14 12h11v9q-5 4-11 0z" fill="#fff" stroke="#b5ad98" stroke-width="1.4"/></svg>
<svg class="a" style="left:1611px;top:501px;" width="30" height="30" viewBox="0 0 30 30"><path d="M4 26l16-16 4 4-16 16z" fill="none" stroke="#b5ad98" stroke-width="1.3"/><path d="M18 8l6-5 4 4-5 6z" fill="#b5ad98"/></svg>
<svg class="a" style="left:1665px;top:501px;" width="30" height="30" viewBox="0 0 30 30"><path d="M15 1l5 6h-3v6h6v-3l6 5-6 5v-3h-6v6h3l-5 6-5-6h3v-6H7v3l-6-5 6-5v3h6V7h-3z" fill="#b5ad98"/></svg>
<svg class="a" style="left:1719px;top:501px;" width="30" height="30" viewBox="0 0 30 30"><g stroke="#b5ad98" stroke-width="1.2"><path d="M15 15L27.0 15.0"/><path d="M15 15L26.6 18.1"/><path d="M15 15L25.4 21.0"/><path d="M15 15L23.5 23.5"/><path d="M15 15L21.0 25.4"/><path d="M15 15L18.1 26.6"/><path d="M15 15L15.0 27.0"/><path d="M15 15L11.9 26.6"/><path d="M15 15L9.0 25.4"/><path d="M15 15L6.5 23.5"/><path d="M15 15L4.6 21.0"/><path d="M15 15L3.4 18.1"/><path d="M15 15L3.0 15.0"/><path d="M15 15L3.4 11.9"/><path d="M15 15L4.6 9.0"/><path d="M15 15L6.5 6.5"/><path d="M15 15L9.0 4.6"/><path d="M15 15L11.9 3.4"/><path d="M15 15L15.0 3.0"/><path d="M15 15L18.1 3.4"/><path d="M15 15L21.0 4.6"/><path d="M15 15L23.5 6.5"/><path d="M15 15L25.4 9.0"/><path d="M15 15L26.6 11.9"/></g><circle cx="15" cy="15" r="6" fill="#b5ad98"/></svg>
<svg class="a" style="left:1773px;top:501px;" width="30" height="30" viewBox="0 0 30 30"><path d="M5 8h20M5 12h20M5 16h20M5 20h20M5 24h20" stroke="#b5ad98" stroke-width="1.4"/></svg>
<svg class="a" style="left:1827px;top:501px;" width="30" height="30" viewBox="0 0 30 30"><path d="M3 14h8l2 2h12v11H3z" fill="#fff" stroke="#b5ad98" stroke-width="1.3"/><circle cx="20" cy="17" r="5" fill="#fff" stroke="#b5ad98" stroke-width="1.3"/><path d="M9 4l2 4M4 7l3 2M14 3l-1 4" stroke="#b5ad98"/></svg>
<svg class="a" style="left:1587px;top:537px;" width="9" height="16" viewBox="0 0 9 16"><path d="M1 1L8 8L1 15z" fill="#000"/></svg>
<div class="a" style="left:1600px;top:532px;width:124px;height:23px;background:linear-gradient(#000 0,#000 50%,#111 50%,#111 100%)"></div>
<div class="t" style="left:1657.3px;top:538.0px;width:11px;overflow-x:clip;overflow-y:visible;font-size:12px;color:#fff;font-weight:400;">G</div>
<div class="a" style="left:1600px;top:555px;width:124px;height:23px;background:linear-gradient(#fff 0,#fff 50%,#f0f0f0 50%,#f0f0f0 100%);border-top:1px solid #999"></div>
<div class="t" style="left:1656.0px;top:561.0px;width:14px;overflow-x:clip;overflow-y:visible;font-size:12px;color:#000;font-weight:400;">丸</div>
<div class="a" style="left:1600px;top:578px;width:124px;height:23px;background:linear-gradient(#fff 0,#fff 50%,#f0f0f0 50%,#f0f0f0 100%);border-top:1px solid #999"></div>
<div class="t" style="left:1649.0px;top:584.0px;width:38px;overflow-x:clip;overflow-y:visible;font-size:12px;color:#000;font-weight:400;transform:scaleX(0.7222);transform-origin:0 0;">カブラ</div>
<div class="a" style="left:1600px;top:601px;width:124px;height:23px;background:linear-gradient(#fff 0,#fff 50%,#f0f0f0 50%,#f0f0f0 100%);border-top:1px solid #999"></div>
<div class="t" style="left:1644.0px;top:607.0px;width:50px;overflow-x:clip;overflow-y:visible;font-size:12px;color:#000;font-weight:400;transform:scaleX(0.7500);transform-origin:0 0;">スクール</div>
<div class="a" style="left:1600px;top:624px;width:124px;height:23px;background:linear-gradient(#fff 0,#fff 50%,#f0f0f0 50%,#f0f0f0 100%);border-top:1px solid #999"></div>
<div class="t" style="left:1647.0px;top:630.0px;width:38px;overflow-x:clip;overflow-y:visible;font-size:12px;color:#000;font-weight:400;transform:scaleX(0.8333);transform-origin:0 0;">髪ベタ</div>
<div class="a" style="left:1600px;top:647px;width:124px;height:23px;background:linear-gradient(#fff 0,#fff 50%,#f0f0f0 50%,#f0f0f0 100%);border-top:1px solid #999"></div>
<div class="t" style="left:1642.0px;top:653.0px;width:50px;overflow-x:clip;overflow-y:visible;font-size:12px;color:#000;font-weight:400;transform:scaleX(0.8333);transform-origin:0 0;">グレー用</div>
<div class="a" style="left:1599px;top:532px;width:1px;height:138px;background:#888"></div>
<div class="a" style="left:1724px;top:532px;width:1px;height:138px;background:#888"></div>
<div class="a" style="left:1599px;top:669px;width:126px;height:1px;background:#888"></div>
<div class="a" style="left:1726px;top:532px;width:16px;height:138px;background:#f0f0f0"></div>
<div class="a" style="left:1727px;top:553px;width:14px;height:82px;background:#cdcdcd"></div>
<svg class="a" style="left:1728px;top:538px;" width="12" height="10" viewBox="0 0 12 10"><path d="M2 7l4-4 4 4" fill="none" stroke="#505050" stroke-width="2.2"/></svg>
<svg class="a" style="left:1728px;top:655px;" width="12" height="10" viewBox="0 0 12 10"><path d="M2 3l4 4 4-4" fill="none" stroke="#505050" stroke-width="2.2"/></svg>
<div class="a" style="left:1743px;top:532px;width:177px;height:138px;background:#fff;border:1px solid #7a7a7a;border-right:none"></div>
<svg class="a" style="left:1743px;top:532px;" width="177" height="138" viewBox="0 0 177 138"><g fill="none" stroke="#b5ad98" stroke-width="1.1"><path d="M32.5 113.4L55 77 77 54 84 41 97.4 24.5 120.5 46.7 106.6 57 94 61.5 77 82z" fill="rgba(246,246,246,.85)"/><path d="M84 41L106.6 57M80 47L102 62" /><ellipse cx="70" cy="73" rx="4" ry="4"/><path d="M32.5 113.4L66 80M58 78l5-5M66 86l5-5"/><path d="M97.4 24.5l23 22" stroke="#cfe8cf"/></g>
<path d="M5 85C15 68 30 52 47 52C62 52 72 64 82 72C95 82 120 82 141 52C125 80 105 89 92 89C78 89 68 80 58 72C48 64 38 62 28 70C20 77 15 85 12 92C8 97 2 92 5 85z" fill="#000"/>
<circle cx="12.5" cy="56.5" r="7" fill="#fff" stroke="#c8d0d8" stroke-width="1.2"/><path d="M9 57l3 3 5-6" fill="none" stroke="#d0d8e8" stroke-width="1.5"/>
<circle cx="138.5" cy="80.5" r="7" fill="#fff" stroke="#b8c0c8" stroke-width="1.2"/><path d="M135 81l3 3 5-6" fill="none" stroke="#3a6a8a" stroke-width="1.8"/>
<circle cx="164.5" cy="15" r="7" fill="#000"/><circle cx="164.5" cy="122" r="3.5" fill="#000"/>
<defs><linearGradient id="sl" x1="0" y1="0" x2="0" y2="1"><stop offset="0" stop-color="#000"/><stop offset="1" stop-color="#fff"/></linearGradient></defs>
<rect x="162" y="31" width="5" height="80" rx="2" fill="url(#sl)" stroke="#333" stroke-width=".8"/>
<path d="M156 55l5-5h10v10h-10z" fill="#c8a040" stroke="#7a5a10" stroke-width=".8"/></svg>
<div class="a" style="left:1603px;top:676px;width:25px;height:25px;background:#000;border:2px solid #f00"></div>
<div class="a" style="left:1632px;top:676px;width:25px;height:25px;background:#fff;border:1px solid #888"></div>
<div class="a" style="left:1661px;top:676px;width:25px;height:25px;border:1px solid #888;background-color:#fff;background-image:linear-gradient(45deg,#d0d0d0 25%,transparent 25%,transparent 75%,#d0d0d0 75%),linear-gradient(45deg,#d0d0d0 25%,transparent 25%,transparent 75%,#d0d0d0 75%);background-size:10px 10px;background-position:0 0,5px 5px"></div>
<div class="a" style="left:1876px;top:678px;width:36px;height:36px;background:#000;border:1px solid #555"></div>
<svg class="a" style="left:1599px;top:703px;" width="321" height="19" viewBox="0 0 321 19"><path d="M76.5 17.5V1.5H137.5L152 17.5" fill="#f0f0f0" stroke="#777"/><path d="M6.5 17.5V1.5H69.5L83 17" fill="#f0f0f0" stroke="#777"/><path d="M0 17.5H6M83 17.5H321" stroke="#777"/></svg>
<div class="t" style="left:1608.0px;top:706.5px;width:80px;overflow-x:clip;overflow-y:visible;font-size:13px;color:#000;font-weight:700;transform:scaleX(0.7436);transform-origin:0 0;">カラーセット</div>
<div class="t" style="left:1681.0px;top:706.5px;width:67px;overflow-x:clip;overflow-y:visible;font-size:13px;color:#000;font-weight:400;transform:scaleX(0.7692);transform-origin:0 0;">カラー詳細</div>
<div class="a" style="left:1599px;top:721px;width:313px;height:60px;background:#fff"></div>
<div class="a" style="left:1599px;top:721px;width:11px;height:11px;background:#000"></div>
<div class="a" style="left:1611px;top:721px;width:11px;height:11px;background:#fff"></div>
<div class="a" style="left:1623px;top:721px;width:11px;height:11px;background-color:#fff;background-image:linear-gradient(45deg,#ccc 25%,transparent 25%,transparent 75%,#ccc 75%),linear-gradient(45deg,#ccc 25%,transparent 25%,transparent 75%,#ccc 75%);background-size:6px 6px;background-position:0 0,3px 3px"></div>
<div class="a" style="left:1635px;top:721px;width:11px;height:11px;background:#0e0e0e"></div>
<div class="a" style="left:1647px;top:721px;width:11px;height:11px;background:#1c1c1c"></div>
<div class="a" style="left:1659px;top:721px;width:11px;height:11px;background:#2a2a2a"></div>
<div class="a" style="left:1671px;top:721px;width:11px;height:11px;background:#383838"></div>
<div class="a" style="left:1683px;top:721px;width:11px;height:11px;background:#4c4c4c"></div>
<div class="a" style="left:1695px;top:721px;width:11px;height:11px;background:#686868"></div>
<div class="a" style="left:1707px;top:721px;width:11px;height:11px;background:#808080"></div>
<div class="a" style="left:1719px;top:721px;width:11px;height:11px;background:#969696"></div>
<div class="a" style="left:1731px;top:721px;width:11px;height:11px;background:#b2b2b2"></div>
<div class="a" style="left:1743px;top:721px;width:11px;height:11px;background:#cacaca"></div>
<div class="a" style="left:1755px;top:721px;width:11px;height:11px;background:#d6d6d6"></div>
<div class="a" style="left:1767px;top:721px;width:11px;height:11px;background:#e4e4e4"></div>
<div class="a" style="left:1779px;top:721px;width:11px;height:11px;background:#f2f2f2"></div>
<div class="a" style="left:1791px;top:721px;width:11px;height:11px;background:#ff0000"></div>
<div class="a" style="left:1803px;top:721px;width:11px;height:11px;background:#ffff00"></div>
<div class="a" style="left:1815px;top:721px;width:11px;height:11px;background:#00ff00"></div>
<div class="a" style="left:1827px;top:721px;width:11px;height:11px;background:#00ffff"></div>
<div class="a" style="left:1839px;top:721px;width:11px;height:11px;background:#0000ff"></div>
<div class="a" style="left:1851px;top:721px;width:11px;height:11px;background:#ff00ff"></div>
<div class="a" style="left:1863px;top:721px;width:11px;height:11px;background:#2c2c30"></div>
<div class="a" style="left:1875px;top:721px;width:11px;height:11px;background:#4a4e58"></div>
<div class="a" style="left:1887px;top:721px;width:11px;height:11px;background:#7888a8"></div>
<div class="a" style="left:1899px;top:721px;width:11px;height:11px;background:#a8b0c8"></div>
<div class="a" style="left:1599px;top:733px;width:11px;height:11px;background:#c8cce0"></div>
<div class="a" style="left:1611px;top:733px;width:11px;height:11px;background:#3a3530"></div>
<div class="a" style="left:1623px;top:733px;width:11px;height:11px;background:#584838"></div>
<div class="a" style="left:1635px;top:733px;width:11px;height:11px;background:#6a5848"></div>
<div class="a" style="left:1647px;top:733px;width:11px;height:11px;background:#b08c78"></div>
<div class="a" style="left:1659px;top:733px;width:11px;height:11px;background:#bca090"></div>
<div class="a" style="left:1671px;top:733px;width:11px;height:11px;background:#ff9090"></div>
<div class="a" style="left:1683px;top:733px;width:11px;height:11px;background:#ffb898"></div>
<div class="a" style="left:1695px;top:733px;width:11px;height:11px;background:#ffd898"></div>
<div class="a" style="left:1707px;top:733px;width:11px;height:11px;background:#ffff90"></div>
<div class="a" style="left:1719px;top:733px;width:11px;height:11px;background:#c8ff90"></div>
<div class="a" style="left:1731px;top:733px;width:11px;height:11px;background:#98ff98"></div>
<div class="a" style="left:1743px;top:733px;width:11px;height:11px;background:#98ffe0"></div>
<div class="a" style="left:1755px;top:733px;width:11px;height:11px;background:#98d8ff"></div>
<div class="a" style="left:1767px;top:733px;width:11px;height:11px;background:#90b8ff"></div>
<div class="a" style="left:1779px;top:733px;width:11px;height:11px;background:#9898ff"></div>
<div class="a" style="left:1791px;top:733px;width:11px;height:11px;background:#b898f8"></div>
<div class="a" style="left:1803px;top:733px;width:11px;height:11px;background:#d898ff"></div>
<div class="a" style="left:1815px;top:733px;width:11px;height:11px;background:#ff98f0"></div>
<div class="a" style="left:1827px;top:733px;width:11px;height:11px;background:#ff98b8"></div>
<div class="a" style="left:1839px;top:733px;width:11px;height:11px;background:#f8e4e0"></div>
<div class="a" style="left:1851px;top:733px;width:11px;height:11px;background:#ffe4d8"></div>
<div class="a" style="left:1863px;top:733px;width:11px;height:11px;background:#e05050"></div>
<div class="a" style="left:1875px;top:733px;width:11px;height:11px;background:#e08050"></div>
<div class="a" style="left:1887px;top:733px;width:11px;height:11px;background:#e0b050"></div>
<div class="a" style="left:1899px;top:733px;width:11px;height:11px;background:#e0e050"></div>
<div class="a" style="left:1599px;top:745px;width:11px;height:11px;background:#98e050"></div>
<div class="a" style="left:1611px;top:745px;width:11px;height:11px;background:#50e060"></div>
<div class="a" style="left:1623px;top:745px;width:11px;height:11px;background:#50e0c0"></div>
<div class="a" style="left:1635px;top:745px;width:11px;height:11px;background:#50b0e0"></div>
<div class="a" style="left:1647px;top:745px;width:11px;height:11px;background:#5088e0"></div>
<div class="a" style="left:1659px;top:745px;width:11px;height:11px;background:#6060f0"></div>
<div class="a" style="left:1671px;top:745px;width:11px;height:11px;background:#8050e0"></div>
<div class="a" style="left:1683px;top:745px;width:11px;height:11px;background:#b050e0"></div>
<div class="a" style="left:1695px;top:745px;width:11px;height:11px;background:#e050c8"></div>
<div class="a" style="left:1707px;top:745px;width:11px;height:11px;background:#e05088"></div>
<div class="a" style="left:1719px;top:745px;width:11px;height:11px;background:#f4e0dc"></div>
<div class="a" style="left:1731px;top:745px;width:11px;height:11px;background:#ffe0d4"></div>
<div class="a" style="left:1743px;top:745px;width:11px;height:11px;background:#f02020"></div>
<div class="a" style="left:1755px;top:745px;width:11px;height:11px;background:#ff5800"></div>
<div class="a" style="left:1767px;top:745px;width:11px;height:11px;background:#ffa000"></div>
<div class="a" style="left:1779px;top:745px;width:11px;height:11px;background:#fff000"></div>
<div class="a" style="left:1791px;top:745px;width:11px;height:11px;background:#80ff00"></div>
<div class="a" style="left:1803px;top:745px;width:11px;height:11px;background:#20e040"></div>
<div class="a" style="left:1815px;top:745px;width:11px;height:11px;background:#00ffc0"></div>
<div class="a" style="left:1827px;top:745px;width:11px;height:11px;background:#00a8ff"></div>
<div class="a" style="left:1839px;top:745px;width:11px;height:11px;background:#0060ff"></div>
<div class="a" style="left:1851px;top:745px;width:11px;height:11px;background:#0000ff"></div>
<div class="a" style="left:1863px;top:745px;width:11px;height:11px;background:#6000ff"></div>
<div class="a" style="left:1875px;top:745px;width:11px;height:11px;background:#b000ff"></div>
<div class="a" style="left:1887px;top:745px;width:11px;height:11px;background:#f00090"></div>
<div class="a" style="left:1899px;top:745px;width:11px;height:11px;background:#ff0050"></div>
<div class="a" style="left:1599px;top:757px;width:11px;height:11px;background:#e8c8c0"></div>
<div class="a" style="left:1611px;top:757px;width:11px;height:11px;background:#e8c4b0"></div>
<div class="a" style="left:1623px;top:757px;width:11px;height:11px;background:#983030"></div>
<div class="a" style="left:1635px;top:757px;width:11px;height:11px;background:#985030"></div>
<div class="a" style="left:1647px;top:757px;width:11px;height:11px;background:#987830"></div>
<div class="a" style="left:1659px;top:757px;width:11px;height:11px;background:#989830"></div>
<div class="a" style="left:1671px;top:757px;width:11px;height:11px;background:#689830"></div>
<div class="a" style="left:1683px;top:757px;width:11px;height:11px;background:#309840"></div>
<div class="a" style="left:1695px;top:757px;width:11px;height:11px;background:#309880"></div>
<div class="a" style="left:1707px;top:757px;width:11px;height:11px;background:#307098"></div>
<div class="a" style="left:1719px;top:757px;width:11px;height:11px;background:#305098"></div>
<div class="a" style="left:1731px;top:757px;width:11px;height:11px;background:#303098"></div>
<div class="a" style="left:1743px;top:757px;width:11px;height:11px;background:#583098"></div>
<div class="a" style="left:1755px;top:757px;width:11px;height:11px;background:#7830a0"></div>
<div class="a" style="left:1767px;top:757px;width:11px;height:11px;background:#983090"></div>
<div class="a" style="left:1779px;top:757px;width:11px;height:11px;background:#983058"></div>
<div class="a" style="left:1791px;top:757px;width:11px;height:11px;background:#ffdcc8"></div>
<div class="a" style="left:1803px;top:757px;width:11px;height:11px;background:#d8a088"></div>
<div class="a" style="left:1815px;top:757px;width:11px;height:11px;background:#5a1010"></div>
<div class="a" style="left:1827px;top:757px;width:11px;height:11px;background:#5a2810"></div>
<div class="a" style="left:1839px;top:757px;width:11px;height:11px;background:#5a4010"></div>
<div class="a" style="left:1851px;top:757px;width:11px;height:11px;background:#585810"></div>
<div class="a" style="left:1863px;top:757px;width:11px;height:11px;background:#305810"></div>
<div class="a" style="left:1875px;top:757px;width:11px;height:11px;background:#105818"></div>
<div class="a" style="left:1887px;top:757px;width:11px;height:11px;background:#105848"></div>
<div class="a" style="left:1899px;top:757px;width:11px;height:11px;background:#103858"></div>
<div class="a" style="left:1599px;top:769px;width:11px;height:11px;background:#102858"></div>
<div class="a" style="left:1611px;top:769px;width:11px;height:11px;background:#0c0c58"></div>
<div class="a" style="left:1623px;top:769px;width:11px;height:11px;background:#200c58"></div>
<div class="a" style="left:1635px;top:769px;width:11px;height:11px;background:#400c58"></div>
<div class="a" style="left:1647px;top:769px;width:11px;height:11px;background:#580c48"></div>
<div class="a" style="left:1659px;top:769px;width:11px;height:11px;background:#580c28"></div>
<div class="a" style="left:1671px;top:769px;width:11px;height:11px;background:#ffccb0"></div>
<div class="a" style="left:1683px;top:769px;width:11px;height:11px;background:#d09070"></div>
<div class="a" style="left:1695px;top:769px;width:11px;height:11px;background:#3a0808"></div>
<div class="a" style="left:1707px;top:769px;width:11px;height:11px;background:#2a1408"></div>
<div class="a" style="left:1719px;top:769px;width:11px;height:11px;background:#2a2008"></div>
<div class="a" style="left:1731px;top:769px;width:11px;height:11px;background:#2a2a08"></div>
<div class="a" style="left:1743px;top:769px;width:11px;height:11px;background:#182a08"></div>
<div class="a" style="left:1755px;top:769px;width:11px;height:11px;background:#082a10"></div>
<div class="a" style="left:1767px;top:769px;width:11px;height:11px;background:#082a28"></div>
<div class="a" style="left:1779px;top:769px;width:11px;height:11px;background:#081c2a"></div>
<div class="a" style="left:1791px;top:769px;width:11px;height:11px;background:#08102a"></div>
<div class="a" style="left:1803px;top:769px;width:11px;height:11px;background:#06062a"></div>
<div class="a" style="left:1815px;top:769px;width:11px;height:11px;background:#14082a"></div>
<div class="a" style="left:1827px;top:769px;width:11px;height:11px;background:#20082a"></div>
<div class="a" style="left:1839px;top:769px;width:11px;height:11px;background:#2a0820"></div>
<div class="a" style="left:1851px;top:769px;width:11px;height:11px;background:#2a0810"></div>
<div class="a" style="left:1863px;top:769px;width:11px;height:11px;background:#f0b898"></div>
<div class="a" style="left:1875px;top:769px;width:11px;height:11px;background:#b08060"></div>
<div class="a" style="left:1887px;top:769px;width:25px;height:12px;background:#f0f0f0"></div>
<div class="a" style="left:1599px;top:865px;width:321px;height:19px;background:#fff;border-top:1px solid #555;border-bottom:1px solid #555"></div>
<div class="a" style="left:1599px;top:865px;width:1px;height:19px;background:#555"></div>
<div class="a" style="left:1617px;top:865px;width:1px;height:19px;background:#555"></div>
<div class="a" style="left:1635px;top:865px;width:1px;height:19px;background:#555"></div>
<div class="a" style="left:1653px;top:865px;width:1px;height:19px;background:#555"></div>
<div class="a" style="left:1671px;top:865px;width:1px;height:19px;background:#555"></div>
<div class="a" style="left:1689px;top:865px;width:1px;height:19px;background:#555"></div>
<div class="a" style="left:1707px;top:865px;width:1px;height:19px;background:#555"></div>
<div class="a" style="left:1725px;top:865px;width:1px;height:19px;background:#555"></div>
<div class="a" style="left:1743px;top:865px;width:1px;height:19px;background:#555"></div>
<div class="a" style="left:1761px;top:865px;width:1px;height:19px;background:#555"></div>
<div class="a" style="left:1779px;top:865px;width:1px;height:19px;background:#555"></div>
<div class="a" style="left:1797px;top:865px;width:1px;height:19px;background:#555"></div>
<div class="a" style="left:1815px;top:865px;width:1px;height:19px;background:#555"></div>
<div class="a" style="left:1833px;top:865px;width:1px;height:19px;background:#555"></div>
<div class="a" style="left:1851px;top:865px;width:1px;height:19px;background:#555"></div>
<div class="a" style="left:1869px;top:865px;width:1px;height:19px;background:#555"></div>
<div class="a" style="left:1887px;top:865px;width:1px;height:19px;background:#555"></div>
<div class="a" style="left:1905px;top:865px;width:1px;height:19px;background:#555"></div>
<div class="a" style="left:1599px;top:884px;width:321px;height:17px;background:#f0f0f0"></div>
<svg class="a" style="left:1603px;top:886px;" width="12" height="12" viewBox="0 0 12 12"><path d="M7 2L3 6l4 4" fill="none" stroke="#505050" stroke-width="2.2"/></svg>
<svg class="a" style="left:1903px;top:886px;" width="12" height="12" viewBox="0 0 12 12"><path d="M4 2l4 4-4 4" fill="none" stroke="#505050" stroke-width="2.2"/></svg>
<div class="a" style="left:1620px;top:885px;width:155px;height:16px;background:#cdcdcd"></div>
</body></html>
